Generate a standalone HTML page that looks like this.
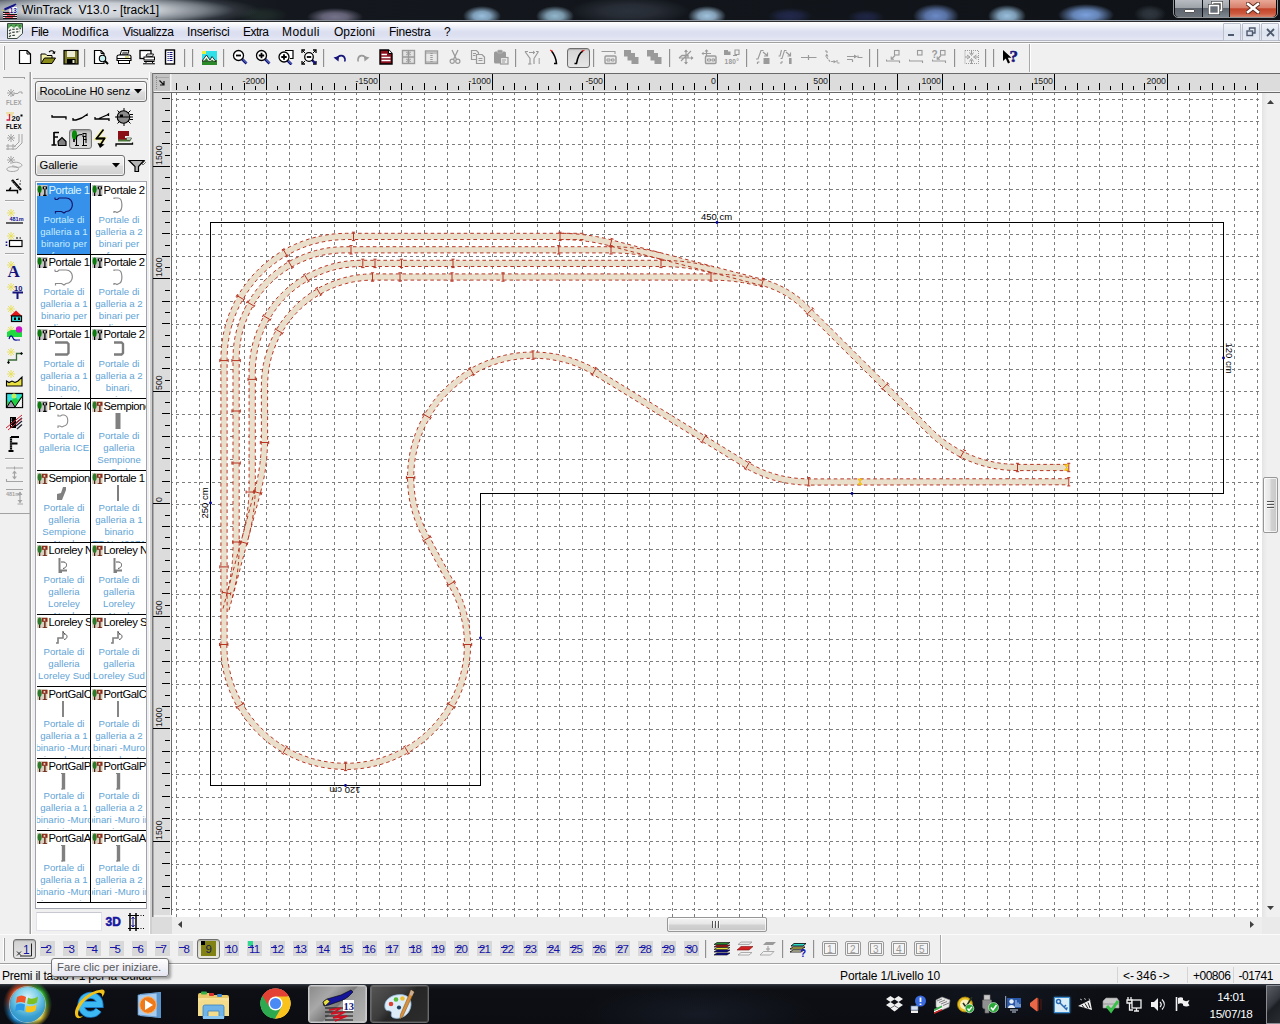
<!DOCTYPE html>
<html><head><meta charset="utf-8"><title>WinTrack</title><style>
*{box-sizing:border-box;margin:0;padding:0}
html,body{width:1280px;height:1024px;overflow:hidden;background:#f0f0f0;font-family:"Liberation Sans",sans-serif;font-size:12px;color:#000}
.abs{position:absolute}
#title{left:0;top:0;width:1280px;height:22px;background:#15181d;overflow:hidden}
#menu{left:0;top:22px;width:1280px;height:22px;background:linear-gradient(#ffffff 0,#f6f7fb 3px,#e4e7f4 7px,#dcdff0 10px,#dde0f1 14px,#e6e8f4 18px,#b4b6c4 18px,#b4b6c4 19px,#f4f4f8 19px,#f4f4f8 20px,#a0a0a0 20px,#a0a0a0 21px,#fdfdfd 21px,#fdfdfd 22px)}
#menu span{position:absolute;top:3px;font-size:12px;color:#000;white-space:nowrap}
#toolbar{left:0;top:44px;width:1280px;height:30px;background:#f0f0f0}
#canvas{left:0;top:0;width:1280px;height:1024px}
</style></head><body>
<svg class="abs" id="canvas" width="1280" height="1024" viewBox="0 0 1280 1024">
<defs><clipPath id="cv"><rect x="172" y="93" width="1090" height="824"/></clipPath></defs>
<rect x="172" y="93" width="1090" height="824" fill="#fff"/>
<g clip-path="url(#cv)">
<path d="M176.5,93V917M199.5,93V917M221.5,93V917M244.5,93V917M266.5,93V917M289.5,93V917M311.5,93V917M334.5,93V917M356.5,93V917M379.5,93V917M401.5,93V917M424.5,93V917M447.5,93V917M469.5,93V917M492.5,93V917M514.5,93V917M537.5,93V917M559.5,93V917M582.5,93V917M604.5,93V917M627.5,93V917M649.5,93V917M672.5,93V917M694.5,93V917M717.5,93V917M739.5,93V917M762.5,93V917M784.5,93V917M807.5,93V917M829.5,93V917M852.5,93V917M874.5,93V917M897.5,93V917M919.5,93V917M942.5,93V917M964.5,93V917M987.5,93V917M1009.5,93V917M1032.5,93V917M1054.5,93V917M1077.5,93V917M1099.5,93V917M1122.5,93V917M1144.5,93V917M1167.5,93V917M1189.5,93V917M1212.5,93V917M1234.5,93V917M1257.5,93V917" stroke="#7d7d7d" stroke-width="1" stroke-dasharray="3 3" stroke-dashoffset="1" fill="none" shape-rendering="crispEdges"/>
<path d="M172,99.5H1262M172,121.5H1262M172,144.5H1262M172,166.5H1262M172,189.5H1262M172,211.5H1262M172,234.5H1262M172,256.5H1262M172,279.5H1262M172,301.5H1262M172,324.5H1262M172,346.5H1262M172,369.5H1262M172,391.5H1262M172,414.5H1262M172,436.5H1262M172,459.5H1262M172,482.5H1262M172,504.5H1262M172,526.5H1262M172,549.5H1262M172,571.5H1262M172,594.5H1262M172,616.5H1262M172,639.5H1262M172,661.5H1262M172,684.5H1262M172,706.5H1262M172,729.5H1262M172,751.5H1262M172,774.5H1262M172,797.5H1262M172,819.5H1262M172,841.5H1262M172,864.5H1262M172,886.5H1262M172,909.5H1262" stroke="#7d7d7d" stroke-width="1" stroke-dasharray="3 3" stroke-dashoffset="2" fill="none" shape-rendering="crispEdges"/>
<path d="M210.5,222.5H1223.5V493.5H480.5V785.5H210.5Z" fill="none" stroke="#000" stroke-width="1" shape-rendering="crispEdges"/>
<path d="M224.0,645.0 L224.0,358.8 L224.1,354.8 L224.3,350.8 L224.6,346.8 L225.0,342.8 L225.6,338.9 L226.4,334.9 L227.2,331.0 L228.2,327.1 L229.3,323.3 L230.5,319.5 L231.8,315.7 L233.3,312.0 L234.9,308.3 L236.6,304.7 L238.5,301.1 L240.4,297.6 L242.5,294.2 L244.6,290.8 L246.9,287.5 L249.3,284.3 L251.8,281.2 L254.4,278.1 L257.1,275.1 L259.9,272.3 L262.7,269.5 L265.7,266.8 L268.8,264.2 L271.9,261.7 L275.1,259.3 L278.4,257.0 L281.8,254.9 L285.2,252.8 L288.7,250.9 L292.3,249.0 L295.9,247.3 L299.6,245.7 L303.3,244.2 L307.1,242.9 L310.9,241.7 L314.7,240.6 L318.6,239.6 L322.5,238.8 L326.5,238.0 L330.4,237.4 L334.4,237.0 L338.4,236.7 L342.4,236.5 L346.4,236.4 L560.0,236.4 L564.0,236.4 L568.1,236.6 L572.1,236.8 L576.1,237.0 L580.1,237.4 L584.1,237.9 L588.1,238.4 L592.1,239.0 L596.1,239.7 L600.0,240.4 L603.9,241.3 L607.9,242.2 L611.8,243.2 L762.5,282.5 L766.5,283.7 L770.5,285.0 L774.4,286.5 L778.2,288.2 L782.0,290.1 L785.7,292.1 L789.2,294.3 L792.7,296.6 L796.1,299.1 L799.4,301.7 L802.5,304.5 L805.5,307.3 L929.6,431.1 L932.5,433.9 L935.5,436.7 L938.6,439.3 L941.8,441.8 L945.1,444.2 L948.4,446.6 L951.9,448.8 L955.4,450.8 L958.9,452.8 L962.5,454.7 L966.2,456.4 L969.9,458.0 L973.7,459.5 L977.5,460.9 L981.4,462.1 L985.3,463.3 L989.3,464.3 L993.3,465.1 L997.3,465.8 L1001.3,466.4 L1005.3,466.9 L1009.4,467.2 L1013.4,467.4 L1017.5,467.5 L1068.8,467.5" fill="none" stroke="#e9dfca" stroke-width="5.8" stroke-linejoin="round"/>
<path d="M560.0,236.4 L584.0,236.4" fill="none" stroke="#e9dfca" stroke-width="5.8" stroke-linejoin="round"/>
<path d="M257.7,491.2 L225.5,611.4" fill="none" stroke="#e9dfca" stroke-width="5.8" stroke-linejoin="round"/>
<path d="M229.3,597.2 L230.3,593.3 L231.2,589.4 L232.1,585.4 L232.8,581.5 L233.5,577.5 L234.1,573.5 L234.6,569.6 L235.1,565.5 L235.5,561.5 L235.7,557.5 L235.9,553.5 L236.1,549.5 L236.1,545.4 L236.1,358.3 L236.2,354.2 L236.4,350.2 L236.8,346.2 L237.3,342.1 L238.0,338.1 L238.8,334.2 L239.8,330.2 L240.9,326.3 L242.2,322.5 L243.6,318.7 L245.2,314.9 L246.8,311.2 L248.7,307.6 L250.6,304.1 L252.7,300.6 L255.0,297.2 L257.3,293.9 L259.8,290.7 L262.4,287.5 L265.1,284.5 L267.9,281.6 L270.8,278.8 L273.8,276.1 L277.0,273.5 L280.2,271.0 L283.5,268.7 L286.9,266.4 L290.3,264.3 L293.9,262.4 L297.5,260.5 L301.2,258.9 L305.0,257.3 L308.8,255.9 L312.6,254.6 L316.5,253.5 L320.5,252.5 L324.4,251.7 L328.4,251.0 L332.5,250.5 L336.5,250.1 L340.5,249.9 L344.6,249.8 L611.0,249.8 L615.0,249.8 L619.1,250.0 L623.1,250.2 L627.1,250.4 L631.1,250.8 L635.1,251.3 L639.1,251.8 L643.1,252.4 L647.1,253.1 L651.0,253.8 L654.9,254.7 L658.9,255.6 L662.8,256.6" fill="none" stroke="#e9dfca" stroke-width="5.8" stroke-linejoin="round"/>
<path d="M245.4,537.1 L246.4,533.2 L247.3,529.3 L248.2,525.4 L248.9,521.4 L249.6,517.4 L250.2,513.5 L250.7,509.5 L251.2,505.5 L251.6,501.5 L251.8,497.4 L252.0,493.4 L252.2,489.4 L252.2,485.4 L252.2,371.9 L252.3,367.8 L252.5,363.8 L252.9,359.8 L253.4,355.7 L254.1,351.7 L254.9,347.8 L255.9,343.8 L257.0,339.9 L258.3,336.1 L259.7,332.3 L261.3,328.5 L262.9,324.8 L264.8,321.2 L266.7,317.6 L268.8,314.2 L271.1,310.8 L273.4,307.5 L275.9,304.3 L278.5,301.1 L281.2,298.1 L284.0,295.2 L286.9,292.4 L289.9,289.7 L293.1,287.1 L296.3,284.6 L299.6,282.3 L303.0,280.0 L306.4,277.9 L310.0,276.0 L313.6,274.1 L317.3,272.5 L321.1,270.9 L324.9,269.5 L328.7,268.2 L332.6,267.1 L336.6,266.1 L340.5,265.3 L344.5,264.6 L348.6,264.1 L352.6,263.7 L356.6,263.5 L360.7,263.4 L661.0,263.4 L665.0,263.4 L669.1,263.6 L673.1,263.8 L677.1,264.0 L681.1,264.4 L685.1,264.9 L689.1,265.4 L693.1,266.0 L697.1,266.7 L701.0,267.4 L704.9,268.3 L708.9,269.2 L712.8,270.2" fill="none" stroke="#e9dfca" stroke-width="5.8" stroke-linejoin="round"/>
<path d="M257.7,491.2 L258.7,487.3 L259.6,483.4 L260.5,479.5 L261.2,475.5 L261.9,471.5 L262.5,467.6 L263.0,463.6 L263.5,459.6 L263.9,455.5 L264.1,451.5 L264.3,447.5 L264.5,443.5 L264.5,439.5 L264.5,385.5 L264.6,381.4 L264.8,377.4 L265.2,373.4 L265.7,369.3 L266.4,365.3 L267.2,361.4 L268.2,357.4 L269.3,353.5 L270.6,349.7 L272.0,345.9 L273.6,342.1 L275.2,338.4 L277.1,334.8 L279.0,331.2 L281.1,327.8 L283.4,324.4 L285.7,321.1 L288.2,317.9 L290.8,314.7 L293.5,311.7 L296.3,308.8 L299.2,306.0 L302.2,303.3 L305.4,300.7 L308.6,298.2 L311.9,295.9 L315.3,293.6 L318.7,291.5 L322.3,289.6 L325.9,287.7 L329.6,286.1 L333.4,284.5 L337.2,283.1 L341.0,281.8 L344.9,280.7 L348.9,279.7 L352.8,278.9 L356.8,278.2 L360.9,277.7 L364.9,277.3 L368.9,277.1 L373.0,277.0 L711.0,277.0 L715.0,277.0 L719.1,277.2 L723.1,277.4 L727.1,277.6 L731.1,278.0 L735.1,278.5 L739.1,279.0 L743.1,279.6 L747.1,280.3 L751.0,281.0 L754.9,281.9 L758.9,282.8 L762.8,283.8" fill="none" stroke="#e9dfca" stroke-width="5.8" stroke-linejoin="round"/>
<path d="M223.7,644.5 L223.8,648.5 L224.0,652.5 L224.3,656.6 L224.8,660.6 L225.4,664.5 L226.1,668.5 L226.9,672.4 L227.9,676.3 L229.0,680.2 L230.3,684.0 L231.7,687.8 L233.1,691.5 L234.8,695.2 L236.5,698.9 L238.3,702.4 L240.3,705.9 L242.4,709.4 L244.6,712.8 L246.9,716.1 L249.3,719.3 L251.9,722.4 L254.5,725.5 L257.2,728.4 L260.0,731.3 L262.9,734.1 L265.9,736.8 L269.0,739.3 L272.2,741.8 L275.4,744.2 L278.8,746.5 L282.2,748.6 L285.6,750.6 L289.2,752.6 L292.8,754.4 L296.4,756.0 L300.1,757.6 L303.9,759.0 L307.7,760.4 L311.6,761.6 L315.4,762.6 L319.4,763.5 L323.3,764.3 L327.3,765.0 L331.3,765.6 L335.3,766.0 L339.3,766.2 L343.3,766.4 L347.3,766.4 L351.3,766.3 L355.4,766.0 L359.4,765.6 L363.4,765.1 L367.3,764.4 L371.3,763.7 L375.2,762.8 L379.1,761.7 L382.9,760.5 L386.8,759.2 L390.5,757.8 L394.2,756.3 L397.9,754.6 L401.5,752.8 L405.1,750.9 L408.5,748.9 L411.9,746.8 L415.3,744.5 L418.5,742.2 L421.7,739.7 L424.8,737.1 L427.8,734.5 L430.8,731.7 L433.6,728.8 L436.3,725.9 L439.0,722.9 L441.5,719.7 L443.9,716.5 L446.3,713.2 L448.5,709.9 L450.6,706.4 L452.6,702.9 L454.4,699.4 L456.2,695.8 L457.8,692.1 L459.3,688.3 L460.7,684.6 L462.0,680.7 L463.1,676.9 L464.1,673.0 L465.0,669.1 L465.7,665.1 L466.4,661.1 L466.8,657.1 L467.2,653.1 L467.4,649.1 L467.5,645.1 L467.5,641.1 L467.3,637.0 L467.0,633.0 L466.5,629.0 L465.9,625.0 L465.2,621.1 L464.4,617.1 L463.4,613.2 L462.3,609.4 L461.1,605.5 L459.8,601.7 L458.3,598.0 L456.7,594.3 L455.0,590.6 L453.1,587.1 L451.2,583.5 L427.0,538.7 L425.1,535.2 L423.2,531.6 L421.5,528.0 L419.9,524.3 L418.4,520.6 L417.1,516.8 L415.9,513.0 L414.8,509.2 L413.8,505.3 L413.0,501.4 L412.2,497.4 L411.6,493.5 L411.2,489.5 L410.9,485.5 L410.7,481.5 L410.6,477.5 L410.7,473.5 L410.9,469.5 L411.2,465.5 L411.6,461.5 L412.2,457.6 L413.0,453.6 L413.8,449.7 L414.8,445.8 L415.9,442.0 L417.1,438.2 L418.4,434.4 L419.9,430.7 L421.5,427.0 L423.2,423.4 L425.1,419.8 L427.0,416.3 L429.1,412.9 L431.2,409.5 L433.5,406.2 L435.9,403.0 L438.4,399.9 L441.0,396.8 L443.7,393.8 L446.5,391.0 L449.3,388.2 L452.3,385.5 L455.4,382.9 L458.5,380.4 L461.7,378.0 L465.0,375.7 L468.4,373.6 L471.8,371.5 L475.3,369.6 L478.9,367.7 L482.5,366.0 L486.2,364.4 L489.9,362.9 L493.7,361.6 L497.5,360.4 L501.3,359.3 L505.2,358.3 L509.1,357.5 L513.1,356.7 L517.0,356.1 L521.0,355.7 L525.0,355.4 L529.0,355.2 L533.0,355.1 L537.0,355.2 L541.0,355.4 L545.0,355.7 L549.0,356.1 L552.9,356.7 L556.9,357.5 L560.8,358.3 L564.7,359.3 L568.5,360.4 L572.3,361.6 L576.1,362.9 L579.8,364.4 L583.5,366.0 L587.1,367.7 L590.7,369.6 L594.2,371.5 L747.5,465.6 L751.0,467.5 L754.6,469.4 L758.2,471.1 L761.9,472.7 L765.6,474.2 L769.4,475.5 L773.2,476.7 L777.0,477.8 L780.9,478.8 L784.8,479.6 L788.8,480.4 L792.7,481.0 L796.7,481.4 L800.7,481.7 L804.7,481.9 L808.7,482.0 L1068.8,481.8" fill="none" stroke="#e9dfca" stroke-width="5.8" stroke-linejoin="round"/>
<path d="M227.1,645.0 L227.1,358.8 L227.2,354.9 L227.4,351.0 L227.7,347.1 L228.1,343.2 L228.7,339.4 L229.4,335.5 L230.2,331.7 L231.2,327.9 L232.2,324.2 L233.4,320.5 L234.7,316.8 L236.2,313.1 L237.7,309.6 L239.4,306.0 L241.2,302.6 L243.1,299.2 L245.1,295.8 L247.2,292.5 L249.4,289.3 L251.8,286.2 L254.2,283.1 L256.7,280.1 L259.3,277.2 L262.0,274.4 L264.8,271.7 L267.7,269.1 L270.7,266.6 L273.8,264.2 L276.9,261.8 L280.1,259.6 L283.4,257.5 L286.7,255.5 L290.2,253.6 L293.6,251.8 L297.2,250.1 L300.7,248.6 L304.4,247.1 L308.1,245.8 L311.8,244.6 L315.5,243.6 L319.3,242.6 L323.1,241.8 L327.0,241.1 L330.8,240.5 L334.7,240.1 L338.6,239.8 L342.5,239.6 L346.4,239.5 L560.0,239.5 L564.0,239.5 L567.9,239.7 L571.9,239.9 L575.8,240.1 L579.8,240.5 L583.7,240.9 L587.7,241.5 L591.6,242.0 L595.5,242.7 L599.4,243.5 L603.3,244.3 L607.1,245.2 L611.0,246.2 L761.7,285.5 L765.6,286.6 L769.4,287.9 L773.2,289.4 L776.9,291.0 L780.5,292.8 L784.1,294.8 L787.6,296.9 L790.9,299.1 L794.2,301.5 L797.4,304.1 L800.4,306.7 L803.3,309.5 L927.4,433.3 L930.4,436.2 L933.5,439.0 L936.7,441.7 L939.9,444.3 L943.3,446.8 L946.7,449.1 L950.2,451.4 L953.8,453.5 L957.4,455.6 L961.2,457.5 L964.9,459.2 L968.7,460.9 L972.6,462.4 L976.5,463.8 L980.5,465.1 L984.5,466.3 L988.6,467.3 L992.6,468.2 L996.7,468.9 L1000.9,469.5 L1005.0,470.0 L1009.2,470.3 L1013.3,470.5 L1017.5,470.6 L1068.8,470.6" fill="none" stroke="#b63523" stroke-width="1" stroke-dasharray="3.6 3"/>
<path d="M220.9,645.0 L220.9,358.8 L221.0,354.7 L221.2,350.6 L221.5,346.5 L222.0,342.4 L222.6,338.4 L223.3,334.3 L224.2,330.3 L225.2,326.3 L226.3,322.4 L227.6,318.5 L228.9,314.6 L230.5,310.8 L232.1,307.0 L233.8,303.3 L235.7,299.6 L237.7,296.1 L239.8,292.5 L242.1,289.1 L244.4,285.7 L246.8,282.4 L249.4,279.2 L252.0,276.1 L254.8,273.0 L257.7,270.1 L260.6,267.2 L263.7,264.4 L266.8,261.8 L270.0,259.2 L273.3,256.8 L276.7,254.5 L280.1,252.2 L283.6,250.1 L287.2,248.1 L290.9,246.2 L294.6,244.5 L298.4,242.9 L302.2,241.3 L306.1,240.0 L310.0,238.7 L313.9,237.6 L317.9,236.6 L321.9,235.7 L326.0,235.0 L330.0,234.4 L334.1,233.9 L338.2,233.6 L342.3,233.4 L346.4,233.3 L560.0,233.3 L564.1,233.3 L568.2,233.5 L572.3,233.7 L576.3,234.0 L580.4,234.3 L584.5,234.8 L588.5,235.3 L592.6,235.9 L596.6,236.6 L600.6,237.4 L604.6,238.3 L608.6,239.2 L612.5,240.2 L763.3,279.5 L767.5,280.7 L771.5,282.1 L775.6,283.7 L779.5,285.4 L783.4,287.3 L787.2,289.4 L790.9,291.6 L794.5,294.1 L798.0,296.6 L801.4,299.3 L804.6,302.2 L807.7,305.2 L931.8,428.9 L934.6,431.7 L937.6,434.3 L940.6,436.9 L943.7,439.4 L946.9,441.7 L950.2,444.0 L953.5,446.1 L956.9,448.2 L960.4,450.1 L963.9,451.9 L967.5,453.6 L971.1,455.2 L974.8,456.6 L978.5,458.0 L982.3,459.2 L986.1,460.3 L990.0,461.2 L993.9,462.1 L997.8,462.8 L1001.7,463.4 L1005.6,463.8 L1009.6,464.1 L1013.5,464.3 L1017.5,464.4 L1068.8,464.4" fill="none" stroke="#b63523" stroke-width="1" stroke-dasharray="3.6 3"/>
<path d="M560.0,239.5 L584.0,239.5" fill="none" stroke="#b63523" stroke-width="1" stroke-dasharray="3.6 3"/>
<path d="M560.0,233.3 L584.0,233.3" fill="none" stroke="#b63523" stroke-width="1" stroke-dasharray="3.6 3"/>
<path d="M254.7,490.4 L222.5,610.6" fill="none" stroke="#b63523" stroke-width="1" stroke-dasharray="3.6 3"/>
<path d="M260.7,492.0 L228.5,612.2" fill="none" stroke="#b63523" stroke-width="1" stroke-dasharray="3.6 3"/>
<path d="M232.3,598.0 L233.3,594.0 L234.2,590.1 L235.1,586.1 L235.9,582.1 L236.6,578.0 L237.2,574.0 L237.7,569.9 L238.2,565.9 L238.5,561.8 L238.8,557.7 L239.0,553.6 L239.2,549.5 L239.2,545.4 L239.2,358.3 L239.3,354.4 L239.5,350.4 L239.9,346.5 L240.4,342.6 L241.0,338.7 L241.8,334.8 L242.8,331.0 L243.9,327.2 L245.1,323.5 L246.5,319.8 L248.0,316.2 L249.6,312.6 L251.4,309.0 L253.3,305.6 L255.4,302.2 L257.5,298.9 L259.8,295.7 L262.2,292.6 L264.7,289.5 L267.3,286.6 L270.1,283.8 L272.9,281.0 L275.8,278.4 L278.9,275.9 L282.0,273.5 L285.2,271.2 L288.5,269.1 L291.9,267.0 L295.3,265.1 L298.9,263.3 L302.5,261.7 L306.1,260.2 L309.8,258.8 L313.5,257.6 L317.3,256.5 L321.1,255.5 L325.0,254.7 L328.9,254.1 L332.8,253.6 L336.7,253.2 L340.7,253.0 L344.6,252.9 L611.0,252.9 L615.0,252.9 L618.9,253.1 L622.9,253.3 L626.8,253.5 L630.8,253.9 L634.7,254.3 L638.7,254.9 L642.6,255.4 L646.5,256.1 L650.4,256.9 L654.3,257.7 L658.1,258.6 L662.0,259.6" fill="none" stroke="#b63523" stroke-width="1" stroke-dasharray="3.6 3"/>
<path d="M226.3,596.4 L227.3,592.6 L228.2,588.7 L229.0,584.8 L229.8,580.9 L230.5,577.0 L231.0,573.1 L231.6,569.2 L232.0,565.2 L232.4,561.3 L232.6,557.3 L232.8,553.4 L233.0,549.4 L233.0,545.4 L233.0,358.3 L233.1,354.1 L233.3,350.0 L233.7,345.8 L234.2,341.7 L234.9,337.6 L235.8,333.5 L236.8,329.4 L238.0,325.4 L239.3,321.4 L240.7,317.5 L242.3,313.7 L244.1,309.9 L245.9,306.2 L248.0,302.5 L250.1,298.9 L252.4,295.4 L254.8,292.0 L257.3,288.7 L260.0,285.5 L262.8,282.4 L265.7,279.4 L268.7,276.5 L271.8,273.7 L275.0,271.0 L278.3,268.5 L281.7,266.1 L285.2,263.8 L288.8,261.7 L292.5,259.6 L296.2,257.8 L300.0,256.0 L303.8,254.4 L307.7,253.0 L311.7,251.7 L315.7,250.5 L319.8,249.5 L323.9,248.6 L328.0,247.9 L332.1,247.4 L336.3,247.0 L340.4,246.8 L344.6,246.7 L611.0,246.7 L615.1,246.7 L619.2,246.9 L623.3,247.1 L627.3,247.4 L631.4,247.7 L635.5,248.2 L639.5,248.7 L643.6,249.3 L647.6,250.0 L651.6,250.8 L655.6,251.7 L659.6,252.6 L663.5,253.6" fill="none" stroke="#b63523" stroke-width="1" stroke-dasharray="3.6 3"/>
<path d="M248.4,537.9 L249.4,534.0 L250.3,530.0 L251.2,526.0 L252.0,522.0 L252.7,517.9 L253.3,513.9 L253.8,509.8 L254.3,505.8 L254.6,501.7 L254.9,497.6 L255.1,493.5 L255.3,489.4 L255.3,485.4 L255.3,371.9 L255.4,368.0 L255.6,364.0 L256.0,360.1 L256.5,356.2 L257.1,352.3 L257.9,348.4 L258.9,344.6 L260.0,340.8 L261.2,337.1 L262.6,333.4 L264.1,329.8 L265.7,326.2 L267.5,322.6 L269.4,319.2 L271.5,315.8 L273.6,312.5 L275.9,309.3 L278.3,306.2 L280.8,303.1 L283.4,300.2 L286.2,297.4 L289.0,294.6 L291.9,292.0 L295.0,289.5 L298.1,287.1 L301.3,284.8 L304.6,282.7 L308.0,280.6 L311.4,278.7 L315.0,276.9 L318.6,275.3 L322.2,273.8 L325.9,272.4 L329.6,271.2 L333.4,270.1 L337.2,269.1 L341.1,268.3 L345.0,267.7 L348.9,267.2 L352.8,266.8 L356.8,266.6 L360.7,266.5 L661.0,266.5 L665.0,266.5 L668.9,266.7 L672.9,266.9 L676.8,267.1 L680.8,267.5 L684.7,267.9 L688.7,268.5 L692.6,269.0 L696.5,269.7 L700.4,270.5 L704.3,271.3 L708.1,272.2 L712.0,273.2" fill="none" stroke="#b63523" stroke-width="1" stroke-dasharray="3.6 3"/>
<path d="M242.4,536.3 L243.4,532.5 L244.3,528.6 L245.1,524.7 L245.9,520.9 L246.6,516.9 L247.1,513.0 L247.7,509.1 L248.1,505.2 L248.5,501.2 L248.7,497.2 L248.9,493.3 L249.1,489.3 L249.1,485.4 L249.1,371.9 L249.2,367.7 L249.4,363.6 L249.8,359.4 L250.3,355.3 L251.0,351.2 L251.9,347.1 L252.9,343.0 L254.1,339.0 L255.4,335.0 L256.8,331.1 L258.4,327.3 L260.2,323.5 L262.0,319.8 L264.1,316.1 L266.2,312.5 L268.5,309.0 L270.9,305.6 L273.4,302.3 L276.1,299.1 L278.9,296.0 L281.8,293.0 L284.8,290.1 L287.9,287.3 L291.1,284.6 L294.4,282.1 L297.8,279.7 L301.3,277.4 L304.9,275.3 L308.6,273.2 L312.3,271.4 L316.1,269.6 L319.9,268.0 L323.8,266.6 L327.8,265.3 L331.8,264.1 L335.9,263.1 L340.0,262.2 L344.1,261.5 L348.2,261.0 L352.4,260.6 L356.5,260.4 L360.7,260.3 L661.0,260.3 L665.1,260.3 L669.2,260.5 L673.3,260.7 L677.3,261.0 L681.4,261.3 L685.5,261.8 L689.5,262.3 L693.6,262.9 L697.6,263.6 L701.6,264.4 L705.6,265.3 L709.6,266.2 L713.5,267.2" fill="none" stroke="#b63523" stroke-width="1" stroke-dasharray="3.6 3"/>
<path d="M260.7,492.0 L261.7,488.1 L262.6,484.1 L263.5,480.1 L264.3,476.1 L265.0,472.0 L265.6,468.0 L266.1,463.9 L266.6,459.9 L266.9,455.8 L267.2,451.7 L267.4,447.6 L267.6,443.5 L267.6,439.5 L267.6,385.5 L267.7,381.6 L267.9,377.6 L268.3,373.7 L268.8,369.8 L269.4,365.9 L270.2,362.0 L271.2,358.2 L272.3,354.4 L273.5,350.7 L274.9,347.0 L276.4,343.4 L278.0,339.8 L279.8,336.2 L281.7,332.8 L283.8,329.4 L285.9,326.1 L288.2,322.9 L290.6,319.8 L293.1,316.7 L295.7,313.8 L298.5,311.0 L301.3,308.2 L304.2,305.6 L307.3,303.1 L310.4,300.7 L313.6,298.4 L316.9,296.3 L320.3,294.2 L323.7,292.3 L327.3,290.5 L330.9,288.9 L334.5,287.4 L338.2,286.0 L341.9,284.8 L345.7,283.7 L349.5,282.7 L353.4,281.9 L357.3,281.3 L361.2,280.8 L365.1,280.4 L369.1,280.2 L373.0,280.1 L711.0,280.1 L715.0,280.1 L718.9,280.3 L722.9,280.5 L726.8,280.7 L730.8,281.1 L734.7,281.5 L738.7,282.1 L742.6,282.6 L746.5,283.3 L750.4,284.1 L754.3,284.9 L758.1,285.8 L762.0,286.8" fill="none" stroke="#b63523" stroke-width="1" stroke-dasharray="3.6 3"/>
<path d="M254.7,490.4 L255.7,486.6 L256.6,482.7 L257.4,478.8 L258.2,474.9 L258.9,471.0 L259.4,467.1 L260.0,463.2 L260.4,459.2 L260.8,455.3 L261.0,451.3 L261.2,447.4 L261.4,443.4 L261.4,439.5 L261.4,385.5 L261.5,381.3 L261.7,377.2 L262.1,373.0 L262.6,368.9 L263.3,364.8 L264.2,360.7 L265.2,356.6 L266.4,352.6 L267.7,348.6 L269.1,344.7 L270.7,340.9 L272.5,337.1 L274.3,333.4 L276.4,329.7 L278.5,326.1 L280.8,322.6 L283.2,319.2 L285.7,315.9 L288.4,312.7 L291.2,309.6 L294.1,306.6 L297.1,303.7 L300.2,300.9 L303.4,298.2 L306.7,295.7 L310.1,293.3 L313.6,291.0 L317.2,288.9 L320.9,286.8 L324.6,285.0 L328.4,283.2 L332.2,281.6 L336.1,280.2 L340.1,278.9 L344.1,277.7 L348.2,276.7 L352.3,275.8 L356.4,275.1 L360.5,274.6 L364.7,274.2 L368.8,274.0 L373.0,273.9 L711.0,273.9 L715.1,273.9 L719.2,274.1 L723.3,274.3 L727.3,274.6 L731.4,274.9 L735.5,275.4 L739.5,275.9 L743.6,276.5 L747.6,277.2 L751.6,278.0 L755.6,278.9 L759.6,279.8 L763.5,280.8" fill="none" stroke="#b63523" stroke-width="1" stroke-dasharray="3.6 3"/>
<path d="M220.6,644.6 L220.7,648.6 L220.9,652.7 L221.2,656.9 L221.7,661.0 L222.3,665.0 L223.0,669.1 L223.9,673.1 L224.9,677.1 L226.1,681.1 L227.4,685.0 L228.8,688.9 L230.3,692.7 L231.9,696.5 L233.7,700.2 L235.6,703.9 L237.6,707.5 L239.8,711.0 L242.0,714.5 L244.4,717.9 L246.9,721.2 L249.5,724.4 L252.2,727.5 L254.9,730.6 L257.8,733.5 L260.8,736.4 L263.9,739.1 L267.1,741.8 L270.3,744.3 L273.7,746.7 L277.1,749.0 L280.6,751.2 L284.1,753.3 L287.8,755.3 L291.4,757.2 L295.2,758.9 L299.0,760.5 L302.8,762.0 L306.7,763.3 L310.7,764.5 L314.7,765.6 L318.7,766.6 L322.7,767.4 L326.8,768.1 L330.9,768.6 L335.0,769.0 L339.1,769.3 L343.2,769.5 L347.4,769.5 L351.5,769.4 L355.6,769.1 L359.7,768.7 L363.8,768.2 L367.9,767.5 L371.9,766.7 L376.0,765.8 L379.9,764.7 L383.9,763.5 L387.8,762.2 L391.7,760.7 L395.5,759.1 L399.2,757.4 L402.9,755.6 L406.6,753.6 L410.1,751.6 L413.6,749.4 L417.1,747.1 L420.4,744.6 L423.7,742.1 L426.8,739.5 L429.9,736.8 L432.9,733.9 L435.8,731.0 L438.7,728.0 L441.4,724.8 L444.0,721.6 L446.4,718.4 L448.8,715.0 L451.1,711.5 L453.3,708.0 L455.3,704.4 L457.2,700.8 L459.0,697.1 L460.7,693.3 L462.2,689.5 L463.7,685.6 L464.9,681.7 L466.1,677.7 L467.1,673.7 L468.0,669.7 L468.8,665.6 L469.4,661.5 L469.9,657.4 L470.3,653.3 L470.5,649.2 L470.6,645.1 L470.5,641.0 L470.4,636.8 L470.0,632.7 L469.6,628.6 L469.0,624.5 L468.3,620.5 L467.4,616.4 L466.4,612.4 L465.3,608.5 L464.0,604.5 L462.7,600.6 L461.1,596.8 L459.5,593.0 L457.7,589.3 L455.9,585.6 L453.9,582.1 L429.7,537.2 L427.8,533.7 L426.0,530.3 L424.3,526.7 L422.8,523.2 L421.3,519.5 L420.0,515.8 L418.8,512.1 L417.8,508.4 L416.8,504.6 L416.0,500.8 L415.3,496.9 L414.7,493.1 L414.3,489.2 L414.0,485.3 L413.8,481.4 L413.7,477.5 L413.8,473.6 L414.0,469.7 L414.3,465.8 L414.7,461.9 L415.3,458.1 L416.0,454.2 L416.8,450.4 L417.8,446.6 L418.8,442.9 L420.0,439.2 L421.3,435.5 L422.8,431.8 L424.3,428.3 L426.0,424.7 L427.8,421.3 L429.7,417.8 L431.7,414.5 L433.8,411.2 L436.0,408.0 L438.4,404.9 L440.8,401.8 L443.3,398.8 L445.9,395.9 L448.6,393.1 L451.4,390.4 L454.3,387.8 L457.3,385.3 L460.4,382.9 L463.5,380.5 L466.7,378.3 L470.0,376.2 L473.3,374.2 L476.8,372.3 L480.2,370.5 L483.8,368.8 L487.3,367.3 L491.0,365.8 L494.7,364.5 L498.4,363.3 L502.1,362.3 L505.9,361.3 L509.7,360.5 L513.6,359.8 L517.4,359.2 L521.3,358.8 L525.2,358.5 L529.1,358.3 L533.0,358.2 L536.9,358.3 L540.8,358.5 L544.7,358.8 L548.6,359.2 L552.4,359.8 L556.3,360.5 L560.1,361.3 L563.9,362.3 L567.6,363.3 L571.3,364.5 L575.0,365.8 L578.7,367.3 L582.2,368.8 L585.8,370.5 L589.2,372.3 L592.6,374.1 L745.9,468.2 L749.5,470.3 L753.2,472.2 L756.9,473.9 L760.7,475.5 L764.5,477.1 L768.4,478.4 L772.3,479.7 L776.2,480.8 L780.2,481.8 L784.2,482.7 L788.3,483.4 L792.3,484.0 L796.4,484.5 L800.5,484.8 L804.6,485.0 L808.7,485.1 L1068.8,484.8" fill="none" stroke="#b63523" stroke-width="1" stroke-dasharray="3.6 3"/>
<path d="M226.8,644.4 L226.9,648.4 L227.1,652.3 L227.4,656.2 L227.8,660.1 L228.4,664.0 L229.1,667.9 L230.0,671.7 L230.9,675.5 L232.0,679.3 L233.2,683.0 L234.6,686.7 L236.0,690.4 L237.6,693.9 L239.3,697.5 L241.1,701.0 L243.0,704.4 L245.0,707.7 L247.2,711.0 L249.4,714.2 L251.8,717.4 L254.2,720.4 L256.8,723.4 L259.4,726.3 L262.2,729.1 L265.0,731.8 L268.0,734.4 L271.0,736.9 L274.1,739.3 L277.2,741.7 L280.5,743.9 L283.8,746.0 L287.2,747.9 L290.6,749.8 L294.1,751.6 L297.7,753.2 L301.3,754.7 L305.0,756.1 L308.7,757.4 L312.4,758.6 L316.2,759.6 L320.0,760.5 L323.9,761.3 L327.7,761.9 L331.6,762.5 L335.5,762.9 L339.4,763.1 L343.4,763.3 L347.3,763.3 L351.2,763.2 L355.1,762.9 L359.0,762.5 L362.9,762.0 L366.8,761.4 L370.6,760.6 L374.4,759.7 L378.2,758.7 L382.0,757.6 L385.7,756.3 L389.4,754.9 L393.0,753.4 L396.6,751.8 L400.1,750.1 L403.5,748.2 L406.9,746.2 L410.3,744.2 L413.5,742.0 L416.7,739.7 L419.8,737.3 L422.8,734.8 L425.8,732.2 L428.6,729.5 L431.4,726.7 L434.0,723.8 L436.6,720.9 L439.1,717.8 L441.4,714.7 L443.7,711.5 L445.9,708.2 L447.9,704.9 L449.9,701.5 L451.7,698.0 L453.4,694.5 L455.0,690.9 L456.4,687.2 L457.8,683.5 L459.0,679.8 L460.1,676.1 L461.1,672.3 L462.0,668.4 L462.7,664.6 L463.3,660.7 L463.8,656.8 L464.1,652.9 L464.3,649.0 L464.4,645.1 L464.4,641.1 L464.2,637.2 L463.9,633.3 L463.4,629.4 L462.9,625.5 L462.2,621.7 L461.4,617.8 L460.4,614.0 L459.4,610.2 L458.2,606.5 L456.8,602.8 L455.4,599.2 L453.9,595.6 L452.2,592.0 L450.4,588.5 L448.4,585.0 L424.3,540.2 L422.3,536.7 L420.4,533.0 L418.7,529.3 L417.1,525.5 L415.5,521.7 L414.2,517.8 L412.9,513.9 L411.8,510.0 L410.8,506.0 L409.9,502.0 L409.2,497.9 L408.6,493.9 L408.1,489.8 L407.8,485.7 L407.6,481.6 L407.5,477.5 L407.6,473.4 L407.8,469.3 L408.1,465.2 L408.6,461.1 L409.2,457.1 L409.9,453.0 L410.8,449.0 L411.8,445.0 L412.9,441.1 L414.2,437.2 L415.5,433.3 L417.1,429.5 L418.7,425.7 L420.4,422.0 L422.3,418.3 L424.3,414.7 L426.4,411.2 L428.7,407.8 L431.0,404.4 L433.4,401.1 L436.0,397.9 L438.6,394.8 L441.4,391.7 L444.3,388.8 L447.2,385.9 L450.3,383.1 L453.4,380.5 L456.6,377.9 L459.9,375.5 L463.3,373.2 L466.7,370.9 L470.2,368.8 L473.8,366.8 L477.5,364.9 L481.2,363.2 L485.0,361.6 L488.8,360.0 L492.7,358.7 L496.6,357.4 L500.5,356.3 L504.5,355.3 L508.5,354.4 L512.6,353.7 L516.6,353.1 L520.7,352.6 L524.8,352.3 L528.9,352.1 L533.0,352.0 L537.1,352.1 L541.2,352.3 L545.3,352.6 L549.4,353.1 L553.4,353.7 L557.5,354.4 L561.5,355.3 L565.5,356.3 L569.4,357.4 L573.3,358.7 L577.2,360.0 L581.0,361.6 L584.8,363.2 L588.5,364.9 L592.2,366.8 L595.8,368.9 L749.1,463.0 L752.5,464.8 L755.9,466.6 L759.5,468.3 L763.0,469.8 L766.7,471.3 L770.4,472.6 L774.1,473.8 L777.8,474.8 L781.6,475.8 L785.4,476.6 L789.3,477.3 L793.1,477.9 L797.0,478.3 L800.9,478.6 L804.8,478.8 L808.7,478.9 L1068.7,478.7" fill="none" stroke="#b63523" stroke-width="1" stroke-dasharray="3.6 3"/>
<path d="M227.9,644.5 L219.5,644.5 M227.9,646.1 L227.9,642.9 M219.5,646.1 L219.5,642.9 M243.7,703.4 L236.4,707.6 M244.5,704.7 L242.9,702.0 M237.2,708.9 L235.6,706.2 M286.8,746.4 L282.6,753.7 M288.1,747.2 L285.4,745.6 M283.9,754.5 L281.2,752.9 M345.6,762.2 L345.6,770.6 M347.2,762.2 L344.0,762.2 M347.2,770.6 L344.0,770.6 M404.5,746.4 L408.7,753.7 M405.8,745.6 L403.1,747.2 M410.0,752.9 L407.3,754.5 M447.5,703.4 L454.8,707.6 M448.3,702.0 L446.7,704.7 M455.6,706.2 L454.0,708.9 M463.3,644.5 L471.7,644.5 M463.3,642.9 L463.3,646.1 M471.7,642.9 L471.7,646.1 M447.5,585.6 L454.8,581.4 M446.7,584.3 L448.3,587.0 M454.0,580.1 L455.6,582.8 M414.8,477.5 L406.4,477.5 M414.8,479.1 L414.8,475.9 M406.4,479.1 L406.4,475.9 M430.6,418.4 L423.4,414.2 M429.8,419.8 L431.4,417.0 M422.6,415.6 L424.2,412.8 M473.9,375.1 L469.7,367.9 M472.5,375.9 L475.3,374.3 M468.3,368.7 L471.1,367.1 M533.0,359.3 L533.0,350.9 M531.4,359.3 L534.6,359.3 M531.4,350.9 L534.6,350.9 M592.1,375.1 L596.3,367.9 M590.7,374.3 L593.5,375.9 M594.9,367.1 L597.7,368.7 M430.6,536.6 L423.4,540.8 M431.4,538.0 L429.8,535.2 M424.2,542.2 L422.6,539.4 M701.6,442.4 L705.9,435.1 M700.2,441.5 L703.0,443.2 M704.5,434.3 L707.3,436.0 M745.4,469.2 L749.6,462.0 M744.0,468.4 L746.8,470.0 M748.2,461.2 L751.0,462.8 M808.7,485.9 L808.7,477.6 M807.1,485.9 L810.3,485.9 M807.1,477.6 L810.3,477.6 M1068.8,485.9 L1068.8,477.6 M1067.2,485.9 L1070.3,485.9 M1067.2,477.6 L1070.3,477.6 M1068.8,471.7 L1068.8,463.3 M1067.2,471.7 L1070.3,471.7 M1067.2,463.3 L1070.3,463.3 M1017.5,471.7 L1017.5,463.3 M1015.9,471.7 L1019.1,471.7 M1015.9,463.3 L1019.1,463.3 M244.0,299.7 L236.8,295.5 M243.2,301.1 L244.8,298.3 M236.0,296.9 L237.6,294.1 M287.3,256.4 L283.1,249.2 M285.9,257.2 L288.7,255.6 M281.7,250.0 L284.5,248.4 M353.5,240.6 L353.5,232.2 M351.9,240.6 L355.1,240.6 M351.9,232.2 L355.1,232.2 M560.0,240.6 L560.0,232.2 M558.4,240.6 L561.6,240.6 M558.4,232.2 L561.6,232.2 M254.3,306.2 L247.0,301.9 M253.5,307.5 L255.1,304.8 M246.2,303.3 L247.8,300.6 M292.4,268.0 L288.2,260.7 M291.1,268.8 L293.8,267.2 M286.9,261.5 L289.6,259.9 M351.0,254.0 L351.0,245.6 M349.4,254.0 L352.6,254.0 M349.4,245.6 L352.6,245.6 M558.8,254.0 L558.8,245.6 M557.1,254.0 L560.4,254.0 M557.1,245.6 L560.4,245.6 M611.0,254.0 L611.0,245.6 M609.4,254.0 L612.6,254.0 M609.4,245.6 L612.6,245.6 M609.9,246.9 L612.1,238.7 M608.4,246.4 L611.5,247.3 M610.5,238.3 L613.6,239.2 M270.4,319.8 L263.1,315.5 M269.6,321.1 L271.2,318.4 M262.3,316.9 L263.9,314.2 M308.5,281.6 L304.3,274.3 M307.2,282.4 L309.9,280.8 M303.0,275.1 L305.7,273.5 M362.8,267.6 L362.8,259.2 M361.2,267.6 L364.4,267.6 M361.2,259.2 L364.4,259.2 M375.0,267.6 L375.0,259.2 M373.4,267.6 L376.6,267.6 M373.4,259.2 L376.6,259.2 M661.0,267.6 L661.0,259.2 M659.4,267.6 L662.6,267.6 M659.4,259.2 L662.6,259.2 M401.5,267.6 L401.5,259.2 M399.9,267.6 L403.1,267.6 M399.9,259.2 L403.1,259.2 M453.0,267.6 L453.0,259.2 M451.4,267.6 L454.6,267.6 M451.4,259.2 L454.6,259.2 M282.7,333.4 L275.4,329.1 M281.9,334.7 L283.5,332.0 M274.6,330.5 L276.2,327.8 M320.8,295.2 L316.6,287.9 M319.5,296.0 L322.2,294.4 M315.3,288.7 L318.0,287.1 M372.5,281.2 L372.5,272.8 M370.9,281.2 L374.1,281.2 M370.9,272.8 L374.1,272.8 M400.0,281.2 L400.0,272.8 M398.4,281.2 L401.6,281.2 M398.4,272.8 L401.6,272.8 M452.0,281.2 L452.0,272.8 M450.4,281.2 L453.6,281.2 M450.4,272.8 L453.6,272.8 M503.0,281.2 L503.0,272.8 M501.4,281.2 L504.6,281.2 M501.4,272.8 L504.6,272.8 M711.0,281.2 L711.0,272.8 M709.4,281.2 L712.6,281.2 M709.4,272.8 L712.6,272.8 M761.4,286.6 L763.6,278.4 M759.9,286.1 L763.0,287.0 M762.0,278.0 L765.1,278.9 M807.0,314.2 L813.0,308.3 M805.9,313.1 L808.2,315.4 M811.8,307.1 L814.1,309.4 M882.0,389.2 L888.0,383.3 M880.9,388.1 L883.2,390.4 M886.8,382.1 L889.1,384.4 M960.4,457.4 L964.6,450.1 M959.0,456.6 L961.8,458.2 M963.2,449.3 L966.0,450.9 M219.8,360.6 L228.2,360.6 M219.8,359.0 L219.8,362.2 M228.2,359.0 L228.2,362.2 M219.8,566.9 L228.2,566.9 M219.8,565.3 L219.8,568.5 M228.2,565.3 L228.2,568.5 M231.9,360.6 L240.3,360.6 M231.9,359.0 L231.9,362.2 M240.3,359.0 L240.3,362.2 M231.9,411.0 L240.3,411.0 M231.9,409.4 L231.9,412.6 M240.3,409.4 L240.3,412.6 M231.9,463.0 L240.3,463.0 M231.9,461.4 L231.9,464.6 M240.3,461.4 L240.3,464.6 M248.0,379.4 L256.4,379.4 M248.0,377.8 L248.0,381.0 M256.4,377.8 L256.4,381.0 M260.3,442.5 L268.7,442.5 M260.3,440.9 L260.3,444.1 M268.7,440.9 L268.7,444.1 M246.1,492.0 L254.5,492.0 M246.1,490.4 L246.1,493.6 M254.5,490.4 L254.5,493.6 M253.4,491.4 L261.6,493.6 M253.9,489.9 L253.0,493.0 M262.0,492.0 L261.1,495.1 M232.7,542.0 L241.1,542.0 M232.7,540.4 L232.7,543.6 M241.1,540.4 L241.1,543.6 M239.4,541.4 L247.6,543.6 M239.9,539.9 L239.0,543.0 M248.0,542.0 L247.1,545.1 M222.4,592.3 L230.6,593.7 M222.6,590.7 L222.1,593.8 M230.9,592.2 L230.4,595.3" fill="none" stroke="#b63523" stroke-width="1"/>
<path d="M857.8,478.8 l4.500,0 l-4.500,6 l4.500,0 z" fill="#ffd800" stroke="#e09000" stroke-width=".4"/>
<path d="M1064.3,464.5 l4.500,0 l-4.500,6 l4.500,0 z" fill="#ffd800" stroke="#e09000" stroke-width=".4"/>
<g font-family='"Liberation Sans", sans-serif' font-size="9.5" fill="#000">
<text x="716.5" y="219.5" text-anchor="middle">450 cm</text>
<text transform="translate(1225.5,358) rotate(90)" text-anchor="middle">120 cm</text>
<text transform="translate(208,503) rotate(-90)" text-anchor="middle">250 cm</text>
<text transform="translate(345,787) rotate(180)" text-anchor="middle">120 cm</text>
</g>
<circle cx="717.0" cy="222.5" r="1.4" fill="#000090"/>
<circle cx="1223.5" cy="358.0" r="1.4" fill="#000090"/>
<circle cx="210.5" cy="503.0" r="1.4" fill="#000090"/>
<circle cx="345.5" cy="785.5" r="1.4" fill="#000090"/>
<circle cx="480.5" cy="638.0" r="1.4" fill="#000090"/>
<circle cx="852.0" cy="493.5" r="1.4" fill="#000090"/>
</g>
<rect x="152" y="73" width="1128" height="20" fill="#dcdcdc"/>
<rect x="152" y="73" width="1128" height="1" fill="#6a6a6a"/>
<rect x="152" y="92" width="1128" height="1" fill="#6a6a6a"/><rect x="152" y="91" width="1128" height="1" fill="#f4f4f4"/>
<rect x="152" y="93" width="19" height="822" fill="#dcdcdc"/>
<rect x="152" y="73" width="1.5" height="860" fill="#7a7a7a"/>
<rect x="170" y="93" width="1" height="822" fill="#f4f4f4"/><rect x="171" y="93" width="1" height="822" fill="#6a6a6a"/>
<rect x="153.5" y="74" width="16.5" height="17" fill="#c4c4c4"/><rect x="170" y="74" width="1.5" height="17" fill="#f4f4f4"/>
<path d="M155.5,77.5H169 M156.5,76V89" stroke="#8a8a8a" stroke-width="1" stroke-dasharray="1 1" fill="none"/>
<path d="M159.5,80.5L163.5,84.5 M164,81V85H160" stroke="#111" stroke-width="1.2" fill="none"/>
<path d="M176.5,83V90M187.5,86V90M199.5,83V90M210.5,86V90M221.5,83V90M232.5,86V90M244.5,83V90M255.5,86V90M266.5,74V90M277.5,86V90M289.5,83V90M300.5,86V90M311.5,83V90M322.5,86V90M334.5,83V90M345.5,86V90M356.5,83V90M367.5,86V90M379.5,74V90M390.5,86V90M401.5,83V90M412.5,86V90M424.5,83V90M435.5,86V90M447.5,83V90M458.5,86V90M469.5,83V90M480.5,86V90M492.5,74V90M503.5,86V90M514.5,83V90M525.5,86V90M537.5,83V90M548.5,86V90M559.5,83V90M570.5,86V90M582.5,83V90M593.5,86V90M604.5,74V90M615.5,86V90M627.5,83V90M638.5,86V90M649.5,83V90M660.5,86V90M672.5,83V90M683.5,86V90M694.5,83V90M705.5,86V90M717.5,74V90M728.5,86V90M739.5,83V90M750.5,86V90M762.5,83V90M773.5,86V90M784.5,83V90M795.5,86V90M807.5,83V90M818.5,86V90M829.5,74V90M840.5,86V90M852.5,83V90M863.5,86V90M874.5,83V90M885.5,86V90M897.5,83V90M908.5,86V90M919.5,83V90M930.5,86V90M942.5,74V90M953.5,86V90M964.5,83V90M975.5,86V90M987.5,83V90M998.5,86V90M1009.5,83V90M1020.5,86V90M1032.5,83V90M1043.5,86V90M1054.5,74V90M1065.5,86V90M1077.5,83V90M1088.5,86V90M1099.5,83V90M1110.5,86V90M1122.5,83V90M1133.5,86V90M1144.5,83V90M1155.5,86V90M1167.5,74V90M1178.5,86V90M1189.5,83V90M1200.5,86V90M1212.5,83V90M1223.5,86V90M1234.5,83V90M1245.5,86V90M1257.5,83V90M897.5,74V90" stroke="#000" stroke-width="1" fill="none" shape-rendering="crispEdges"/>
<g font-family='"Liberation Sans", sans-serif' font-size="8.800" fill="#1a1a1a"><text x="265" y="83.5" text-anchor="end">-2000</text><text x="378" y="83.5" text-anchor="end">-1500</text><text x="491" y="83.5" text-anchor="end">-1000</text><text x="603" y="83.5" text-anchor="end">-500</text><text x="716" y="83.5" text-anchor="end">0</text><text x="828" y="83.5" text-anchor="end">500</text><text x="941" y="83.5" text-anchor="end">1000</text><text x="1053" y="83.5" text-anchor="end">1500</text><text x="1166" y="83.5" text-anchor="end">2000</text></g>
<path d="M162,98.5H170M165,110.5H170M162,121.5H170M165,132.5H170M162,143.5H170M165,155.5H170M153,166.5H170M165,177.5H170M162,188.5H170M165,200.5H170M162,211.5H170M165,222.5H170M162,233.5H170M165,245.5H170M162,256.5H170M165,267.5H170M153,278.5H170M165,290.5H170M162,301.5H170M165,312.5H170M162,323.5H170M165,335.5H170M162,346.5H170M165,357.5H170M162,368.5H170M165,380.5H170M153,391.5H170M165,402.5H170M162,413.5H170M165,425.5H170M162,436.5H170M165,447.5H170M162,458.5H170M165,470.5H170M162,481.5H170M165,492.5H170M153,503.5H170M165,515.5H170M162,526.5H170M165,537.5H170M162,548.5H170M165,560.5H170M162,571.5H170M165,582.5H170M162,593.5H170M165,605.5H170M153,616.5H170M165,627.5H170M162,638.5H170M165,650.5H170M162,661.5H170M165,672.5H170M162,683.5H170M165,695.5H170M162,706.5H170M165,717.5H170M153,728.5H170M165,740.5H170M162,751.5H170M165,762.5H170M162,773.5H170M165,785.5H170M162,796.5H170M165,807.5H170M162,818.5H170M165,830.5H170M153,841.5H170M165,852.5H170M162,863.5H170M165,875.5H170M162,886.5H170M165,897.5H170M162,908.5H170" stroke="#000" stroke-width="1" fill="none" shape-rendering="crispEdges"/>
<g font-family='"Liberation Sans", sans-serif' font-size="8.800" fill="#1a1a1a"><text transform="translate(161.5,165) rotate(-90)" text-anchor="start">1500</text><text transform="translate(161.5,277) rotate(-90)" text-anchor="start">1000</text><text transform="translate(161.5,390) rotate(-90)" text-anchor="start">500</text><text transform="translate(161.5,502) rotate(-90)" text-anchor="start">0</text><text transform="translate(161.5,615) rotate(-90)" text-anchor="start">500</text><text transform="translate(161.5,727) rotate(-90)" text-anchor="start">1000</text><text transform="translate(161.5,840) rotate(-90)" text-anchor="start">1500</text></g>
</svg>
<div class="abs" id="title">
<div class="abs" style="left:0;top:0;width:1280px;height:20px;background:radial-gradient(ellipse 19px 10px at 482px 16px,rgba(160,200,232,0.95) 0%,rgba(160,200,232,0.76) 45%,rgba(160,200,232,0) 100%),
radial-gradient(ellipse 19px 10px at 555px 16px,rgba(160,200,224,0.90) 0%,rgba(160,200,224,0.72) 45%,rgba(160,200,224,0) 100%),
radial-gradient(ellipse 19px 10px at 707px 16px,rgba(168,204,232,0.95) 0%,rgba(168,204,232,0.76) 45%,rgba(168,204,232,0) 100%),
radial-gradient(ellipse 23px 12px at 936px 16px,rgba(112,144,208,0.95) 0%,rgba(112,144,208,0.76) 45%,rgba(112,144,208,0) 100%),
radial-gradient(ellipse 19px 11px at 1007px 16px,rgba(160,200,232,0.95) 0%,rgba(160,200,232,0.76) 45%,rgba(160,200,232,0) 100%),
radial-gradient(ellipse 28px 11px at 1086px 15px,rgba(128,168,232,0.95) 0%,rgba(128,168,232,0.76) 45%,rgba(128,168,232,0) 100%),
radial-gradient(ellipse 28px 9px at 335px 17px,rgba(150,145,175,0.75) 0%,rgba(150,145,175,0.60) 45%,rgba(150,145,175,0) 100%),
radial-gradient(ellipse 26px 8px at 262px 15px,rgba(40,60,50,0.50) 0%,rgba(40,60,50,0.40) 45%,rgba(40,60,50,0) 100%),
radial-gradient(ellipse 22px 8px at 790px 16px,rgba(40,48,96,0.70) 0%,rgba(40,48,96,0.56) 45%,rgba(40,48,96,0) 100%),
radial-gradient(ellipse 18px 7px at 866px 17px,rgba(40,48,96,0.60) 0%,rgba(40,48,96,0.48) 45%,rgba(40,48,96,0) 100%),
radial-gradient(ellipse 16px 9px at 1150px 14px,rgba(80,90,100,0.50) 0%,rgba(80,90,100,0.40) 45%,rgba(80,90,100,0) 100%),
radial-gradient(ellipse 60px 14px at 630px 11px,rgba(46,52,62,0.90) 0%,rgba(46,52,62,0.72) 45%,rgba(46,52,62,0) 100%),
linear-gradient(90deg,#2a3038 0%,#14181e 22%,#0f1318 100%)"></div>
<div class="abs" style="left:-60px;top:-8px;width:340px;height:36px;background:radial-gradient(ellipse 170px 18px at 150px 18px,rgba(232,236,240,.96) 0%,rgba(214,219,225,.92) 40%,rgba(160,167,176,.68) 68%,rgba(100,108,118,.3) 85%,rgba(90,96,104,0) 100%)"></div>
<div class="abs" style="left:0;top:20px;width:1280px;height:1px;background:linear-gradient(90deg,#c8ccd2 0,#b0b6be 200px,#8a9098 320px,#9aa4b0 100%)"></div>
<div class="abs" style="left:0;top:21px;width:1280px;height:1px;background:#2c2e32"></div>
<svg class="abs" style="left:1px;top:2px" width="16" height="18" viewBox="0 0 16 18"><rect x="8.500" y="5" width="7.500" height="6.500" fill="#fff"/><text x="8.800" y="10.800" font-size="6.800" font-weight="bold" fill="#15158a" font-family="Liberation Sans" textLength="7" lengthAdjust="spacingAndGlyphs">13</text><path d="M1,8.500L4,6L14.500,1.500L15.500,2.500L12,5L5,8L2,9.500Z" fill="#15158a"/><path d="M.5,8.500L3,7L4,8.500L1.500,9.500Z" fill="#c8c870"/><path d="M2,10.500H8.500M2,12.500H16M2,14.500H16M2,16.500H16" stroke="#111" stroke-width="1"/><path d="M4,11.500H9M6,13.500H14M4,15.500H12" stroke="#e85060" stroke-width="1"/><path d="M2,11.500H4M2,13.500H6M14,13.500H16M2,15.500H4M12,15.500H16" stroke="#f4d8dc" stroke-width="1"/></svg>
<span class="abs" style="left:22px;top:3px;font-size:12px;white-space:pre;color:#000;letter-spacing:-.05px">WinTrack  V13.0 - [track1]</span>
<!-- window buttons -->
<div class="abs" style="left:1173px;top:-4px;width:105px;height:22px;border:1px solid rgba(255,255,255,.55);border-radius:0 0 5px 5px;box-shadow:0 0 0 1px rgba(0,0,0,.5) inset"></div>
<div class="abs" style="left:1175px;top:0;width:27px;height:17px;border-radius:0 0 0 4px;background:linear-gradient(#b8bcc2 0%,#9ea3aa 45%,#5e646d 50%,#6e747c 100%)"></div>
<div class="abs" style="left:1203px;top:0;width:26px;height:17px;background:linear-gradient(#b8bcc2 0%,#9ea3aa 45%,#5e646d 50%,#7e8890 100%)"></div>
<div class="abs" style="left:1230px;top:0;width:46px;height:17px;border-radius:0 0 4px 0;background:linear-gradient(#e8a898 0%,#d8806c 45%,#c2432a 52%,#cc5a3e 80%,#d8846c 100%)"></div>
<div class="abs" style="left:1184px;top:9px;width:11px;height:4px;background:#fff;border:1px solid #555;border-radius:1px"></div>
<svg class="abs" style="left:1208px;top:1px" width="16" height="14" viewBox="0 0 16 14"><rect x="4.5" y="1.5" width="9" height="8" fill="none" stroke="#444" stroke-width="3"/><rect x="4.5" y="1.5" width="9" height="8" fill="none" stroke="#fff" stroke-width="1.6"/><rect x="1.5" y="4.5" width="9" height="8" fill="#888" stroke="#444" stroke-width="3"/><rect x="1.5" y="4.5" width="9" height="8" fill="#6a7078" stroke="#fff" stroke-width="1.6"/></svg>
<svg class="abs" style="left:1246px;top:2px" width="14" height="12" viewBox="0 0 14 12"><path d="M2,2L12,10M12,2L2,10" stroke="#5a2a20" stroke-width="4.4" stroke-linecap="square"/><path d="M2,2L12,10M12,2L2,10" stroke="#fff" stroke-width="2.6" stroke-linecap="square"/></svg>
</div>
<div class="abs" id="menu"><span style="left:31px;letter-spacing:-0.45px">File</span><span style="left:62px;letter-spacing:0.29px">Modifica</span><span style="left:123px;letter-spacing:-0.33px">Visualizza</span><span style="left:187px;letter-spacing:-0.17px">Inserisci</span><span style="left:243px;letter-spacing:-0.50px">Extra</span><span style="left:282px;letter-spacing:0.43px">Moduli</span><span style="left:334px;letter-spacing:0.04px">Opzioni</span><span style="left:389px;letter-spacing:-0.24px">Finestra</span><span style="left:444px;letter-spacing:-0.70px">?</span><svg class="abs" style="left:7px;top:1px" width="16" height="16" viewBox="0 0 16 16"><path d="M.5,.5H15.500V10.500L10,15.500H.5Z" fill="#f4f6f2" stroke="#3a4a40" stroke-width="1"/><path d="M1,1H15V4L13,6L10,3L7,5L4,3L1,6Z" fill="#5aa25a"/><path d="M3,3L5,2M8,2.500L10,2M12,3L13.500,2.500" stroke="#1a6a2a" stroke-width="1"/><path d="M2,8C5,5 9,7 14,5.500M2,11C5,8 9,10 13,8M2,14C4,11.500 7,13 9,12" stroke="#39423c" stroke-width="1.100" fill="none" stroke-dasharray="2.500 1.200"/></svg><div class="abs" style="left:1223px;top:1px;width:18px;height:18px;border:1px solid #b9c0cc;background:linear-gradient(#f2f5fa,#dde3ef 50%,#e6eaf3);border-radius:1px"></div><div class="abs" style="left:1242px;top:1px;width:18px;height:18px;border:1px solid #b9c0cc;background:linear-gradient(#f2f5fa,#dde3ef 50%,#e6eaf3);border-radius:1px"></div><div class="abs" style="left:1261px;top:1px;width:18px;height:18px;border:1px solid #b9c0cc;background:linear-gradient(#f2f5fa,#dde3ef 50%,#e6eaf3);border-radius:1px"></div><div class="abs" style="left:1228px;top:12px;width:6px;height:2px;background:#4d5a6e"></div><svg class="abs" style="left:1246px;top:5px" width="10" height="10" viewBox="0 0 10 10"><path d="M3.5,3V1H9V6H7" fill="none" stroke="#4d5a6e" stroke-width="1.4"/><rect x="1" y="4" width="5.5" height="4.5" fill="none" stroke="#4d5a6e" stroke-width="1.4"/></svg><svg class="abs" style="left:1266px;top:6px" width="9" height="9" viewBox="0 0 9 9"><path d="M1,1L8,8M8,1L1,8" stroke="#4d5a6e" stroke-width="1.8"/></svg></div>
<div class="abs" style="left:3px;top:46px;width:2px;height:24px;border-left:1px solid #fff;border-right:1px solid #a0a0a0"></div>
<svg class="abs" style="left:17px;top:49px" width="16" height="16" viewBox="0 0 16 16"><path d="M2.5,1.5H10L13.5,5V14.5H2.5Z" fill="#fff" stroke="#000" stroke-width="1.2"/><path d="M10,1.5V5H13.5" fill="none" stroke="#000" stroke-width="1"/></svg>
<svg class="abs" style="left:40px;top:49px" width="16" height="16" viewBox="0 0 16 16"><path d="M1,14.5V5H5.5L7,6.5H12V9" fill="#f5f0a8" stroke="#000" stroke-width="1"/><path d="M1,14.5L4.5,9H15.5L12,14.5Z" fill="#8a8a18" stroke="#000" stroke-width="1"/><path d="M9,3C11,1 13.5,1.5 14.5,4" fill="none" stroke="#000" stroke-width="1.1"/><path d="M15.5,2L14.8,5L12,4.3Z" fill="#000"/></svg>
<svg class="abs" style="left:63px;top:49px" width="16" height="16" viewBox="0 0 16 16"><rect x="1" y="1.5" width="14" height="13.5" fill="#7e7e28" stroke="#000" stroke-width="1.2"/><rect x="4" y="2" width="8" height="6" fill="#ececd6"/><rect x="4" y="10" width="8.5" height="5" fill="#000"/><rect x="9.5" y="11" width="2" height="3" fill="#ececd6"/></svg>
<div class="abs" style="left:84px;top:49px;width:1px;height:18px;background:#909090;box-shadow:1px 0 0 #e0e0e0"></div>
<svg class="abs" style="left:93px;top:49px" width="16" height="16" viewBox="0 0 16 16"><path d="M1.5,1.5H8L11,4.5V14.5H1.5Z" fill="#fff" stroke="#000" stroke-width="1.2"/><path d="M8,1.5V4.5H11" fill="none" stroke="#000"/><path d="M11.5,11.5L15,15" stroke="#000" stroke-width="2"/><circle cx="9.5" cy="9.5" r="3.2" fill="#c8f0f0" stroke="#000" stroke-width="1.1"/></svg>
<svg class="abs" style="left:116px;top:49px" width="16" height="16" viewBox="0 0 16 16"><path d="M4,6L5.5,1.5H13L11.5,6Z" fill="#fff" stroke="#000"/><path d="M6.5,3.3H11.5M6,4.8H11" stroke="#000" stroke-width=".7"/><path d="M1,7.5Q1,6 3,6H13Q15,6 15,7.5V11.5H1Z" fill="#fff" stroke="#000" stroke-width="1.1"/><path d="M1,9.5H15" stroke="#000"/><rect x="2.5" y="11.5" width="11" height="3" fill="#fff" stroke="#000"/><path d="M9,8H13" stroke="#b0b000" stroke-width="1"/></svg>
<svg class="abs" style="left:139px;top:49px" width="16" height="16" viewBox="0 0 16 16"><rect x="1" y="1.5" width="11" height="8" fill="#fff" stroke="#000" stroke-width="1.3"/><path d="M7,7L8,5H14.5L13.5,7.5Z" fill="#fff" stroke="#000" stroke-width=".9"/><rect x="5" y="8" width="10.5" height="3" fill="#fff" stroke="#000"/><path d="M5,12.5H15.5M6,14.5L8,12.5M14.5,14.5L12.5,12.5M4,14.8H16" stroke="#000" stroke-width="1"/></svg>
<svg class="abs" style="left:162px;top:49px" width="16" height="16" viewBox="0 0 16 16"><rect x="3.5" y="1" width="9" height="14" fill="#fff" stroke="#000" stroke-width="1.4"/><path d="M5.5,3.5H10.5M5.5,5.5H10.5M5.5,7.5H10.5M5.5,9.5H10.5M5.5,11.5H10.5" stroke="#15157a" stroke-width="1.1" stroke-dasharray="1.2 .8 4 0"/></svg>
<div class="abs" style="left:184px;top:49px;width:1px;height:18px;background:#909090;box-shadow:1px 0 0 #e0e0e0"></div>
<div class="abs" style="left:192px;top:49px;width:1px;height:18px;background:#909090;box-shadow:1px 0 0 #e0e0e0"></div>
<svg class="abs" style="left:202px;top:50px" width="16" height="16" viewBox="0 0 16 16"><rect x="0" y="1" width="15" height="14" fill="#30e0e8"/><rect x="0" y="1" width="4" height="3" fill="#e8f040"/><rect x="0" y="10" width="15" height="5" fill="#2a8a2a"/><path d="M0,11L4.5,5L8,10L10,6.5L14,11.5Z" fill="#fff" stroke="#202020" stroke-width=".9"/><path d="M2,11L4.5,8L7.5,12.5L10,9.5L13,12Z" fill="#2a7a2a"/></svg>
<div class="abs" style="left:223px;top:49px;width:1px;height:18px;background:#909090;box-shadow:1px 0 0 #e0e0e0"></div>
<svg class="abs" style="left:232px;top:49px" width="16" height="16" viewBox="0 0 16 16"><path d="M9.5,9.5L14.5,14.5" stroke="#10107a" stroke-width="2.6"/><path d="M10,9.5L14.5,14" stroke="#7aa0e0" stroke-width=".9"/><circle cx="6.5" cy="6.5" r="5" fill="#fff" stroke="#000" stroke-width="1.3"/><path d="M4,6.5H9" stroke="#000" stroke-width="1.8"/></svg>
<svg class="abs" style="left:255px;top:49px" width="16" height="16" viewBox="0 0 16 16"><path d="M9.5,9.5L14.5,14.5" stroke="#10107a" stroke-width="2.6"/><path d="M10,9.5L14.5,14" stroke="#7aa0e0" stroke-width=".9"/><circle cx="6.5" cy="6.5" r="5" fill="#fff" stroke="#000" stroke-width="1.3"/><path d="M3.8,6.5H9.2M6.5,3.8V9.2" stroke="#000" stroke-width="1.8"/></svg>
<svg class="abs" style="left:278px;top:49px" width="16" height="16" viewBox="0 0 16 16"><path d="M7,1.5H15V9.5H12" fill="#fff" stroke="#000" stroke-width="1.2"/><path d="M9,11L13.5,15.5" stroke="#10107a" stroke-width="2.6"/><path d="M9.5,11L13.5,15" stroke="#7aa0e0" stroke-width=".9"/><circle cx="6" cy="8" r="5" fill="#fff" stroke="#000" stroke-width="1.3"/><path d="M3.3,8H8.7M6,5.3V10.7" stroke="#000" stroke-width="1.8"/></svg>
<svg class="abs" style="left:301px;top:49px" width="16" height="16" viewBox="0 0 16 16"><path d="M1,4V1H4M12,1H15V4M1,12V15H4M15,12V15H12" fill="none" stroke="#000" stroke-width="1.3"/><path d="M1,1L4,4M15,1L12,4M1,15L4,12" stroke="#000" stroke-width="1"/><path d="M10.5,10.5L14.5,14.5" stroke="#10107a" stroke-width="2.4"/><circle cx="8" cy="8" r="4.3" fill="#fff" stroke="#000" stroke-width="1.3"/><path d="M5.8,8H10.2" stroke="#000" stroke-width="1.8"/></svg>
<div class="abs" style="left:323px;top:49px;width:1px;height:18px;background:#909090;box-shadow:1px 0 0 #e0e0e0"></div>
<svg class="abs" style="left:332px;top:50px" width="16" height="16" viewBox="0 0 16 16"><path d="M5,9C6,5 12,4 13,9C13.3,10.5 13,11 12.5,11.5" fill="none" stroke="#15157a" stroke-width="1.6"/><path d="M1.5,7.5L7,6L6.5,11.5Z" fill="#15157a"/></svg>
<svg class="abs" style="left:355px;top:50px" width="16" height="16" viewBox="0 0 16 16"><path d="M11,9C10,5 4,4 3,9C2.7,10.5 3,11 3.5,11.5" fill="none" stroke="#9a9a9a" stroke-width="1.6"/><path d="M14.5,7.5L9,6L9.5,11.5Z" fill="#9a9a9a"/></svg>
<svg class="abs" style="left:378px;top:49px" width="16" height="16" viewBox="0 0 16 16"><path d="M2,1H10.5L14,4.5V15H2Z" fill="#8a1020" stroke="#000" stroke-width="1.4"/><path d="M10.5,1V4.5H14" fill="#fff" stroke="#000" stroke-width="1"/><path d="M3.5,5.5H9M3.5,8.5H12.5M3.5,11.5H12.5" stroke="#fff" stroke-width="1.5"/></svg>
<svg class="abs" style="left:401px;top:49px" width="16" height="16" viewBox="0 0 16 16"><rect x="1.5" y="1.5" width="12" height="13" fill="#e2e2e2" stroke="#9a9a9a" stroke-width="1.4"/><path d="M1.5,8H13.5M7.5,1.5V14.5" stroke="#9a9a9a" stroke-width="1.6"/><path d="M5,3L10,6M10,3L5,6M5,10L10,13M10,10L5,13" stroke="#9a9a9a" stroke-width=".9"/></svg>
<svg class="abs" style="left:424px;top:49px" width="16" height="16" viewBox="0 0 16 16"><rect x="1.5" y="2" width="12" height="12.5" fill="#e8e8e8" stroke="#9a9a9a" stroke-width="1.4"/><path d="M1.5,4H13.5M1.5,13H13.5" stroke="#9a9a9a" stroke-width="1.2"/><path d="M7.5,4V13" stroke="#9a9a9a" stroke-width="2.4" stroke-dasharray="1 1"/></svg>
<svg class="abs" style="left:447px;top:49px" width="16" height="16" viewBox="0 0 16 16"><path d="M5,1L9.5,10.5M11,1L6.5,10.5" stroke="#9a9a9a" stroke-width="1.3" fill="none"/><circle cx="5.2" cy="12.3" r="2.1" fill="none" stroke="#9a9a9a" stroke-width="1.2"/><circle cx="10.8" cy="12.3" r="2.1" fill="none" stroke="#9a9a9a" stroke-width="1.2"/></svg>
<svg class="abs" style="left:470px;top:49px" width="16" height="16" viewBox="0 0 16 16"><path d="M1.5,1.5H6.5L8.5,3.5V10.5H1.5Z" fill="#ececec" stroke="#9a9a9a" stroke-width="1.2"/><path d="M6.5,5.5H12L14.5,8V14.5H6.5Z" fill="#ececec" stroke="#9a9a9a" stroke-width="1.2"/><path d="M3,4.5H6M3,6.5H5.5M8.5,9.5H12.5M8.5,11.5H12.5" stroke="#9a9a9a" stroke-width="1"/></svg>
<svg class="abs" style="left:493px;top:49px" width="16" height="16" viewBox="0 0 16 16"><rect x="1" y="2.5" width="12" height="12" rx="1.5" fill="#9a9a9a"/><rect x="4.5" y="1" width="5" height="3" rx="1" fill="#9a9a9a" stroke="#c8c8c8" stroke-width=".6"/><rect x="7.5" y="8.5" width="7.5" height="6.5" fill="#ececec" stroke="#9a9a9a" stroke-width="1.2"/><path d="M9,11H13M9,13H12" stroke="#9a9a9a" stroke-width="1"/></svg>
<div class="abs" style="left:515px;top:49px;width:1px;height:18px;background:#909090;box-shadow:1px 0 0 #e0e0e0"></div>
<svg class="abs" style="left:524px;top:49px" width="16" height="16" viewBox="0 0 16 16"><path d="M1,2.5L6,9.5V15M10,9.5V15M14.5,2.5L10,9.5M6,9.5 M1,2.5H4 M12,2.5H14.5 M4,15H7.5" fill="none" stroke="#9a9a9a" stroke-width="1.2"/><path d="M5,3.5H10.5M9,2L10.8,3.5L9,5M15.2,9V15" stroke="#9a9a9a" stroke-width="1" fill="none"/></svg>
<svg class="abs" style="left:547px;top:49px" width="16" height="16" viewBox="0 0 16 16"><path d="M4.5,2C7,5 9,9 9.5,14.5H7" fill="none" stroke="#000" stroke-width="1.5"/><path d="M3.2,1L5.5,2.5" stroke="#e02020" stroke-width="1.2"/></svg>
<div class="abs" style="left:567px;top:48px;width:23px;height:20px;border:1px solid #6f6f6f;border-radius:3px;background:linear-gradient(#d4d4d4,#e6e6e6);box-shadow:inset 0 1px 1px rgba(0,0,0,.18)"></div>
<svg class="abs" style="left:571px;top:49px" width="16" height="16" viewBox="0 0 16 16"><path d="M3.5,14.5H5.5C6.5,9 8,4 12,2" fill="none" stroke="#000" stroke-width="1.5"/><path d="M10.5,2.2L13.5,1.2" stroke="#e02020" stroke-width="1.2"/></svg>
<div class="abs" style="left:593px;top:49px;width:1px;height:18px;background:#909090;box-shadow:1px 0 0 #e0e0e0"></div>
<svg class="abs" style="left:601px;top:49px" width="16" height="16" viewBox="0 0 16 16"><path d="M.5,2.5H14V5" fill="none" stroke="#9a9a9a" stroke-width="1.1"/><rect x="4" y="7" width="11" height="7.5" rx="1" fill="#e8e8e8" stroke="#9a9a9a" stroke-width="1.4"/><path d="M6,10H9V12H6ZM10.5,10H13V12H10.5Z" fill="none" stroke="#9a9a9a" stroke-width="1"/></svg>
<svg class="abs" style="left:624px;top:49px" width="16" height="16" viewBox="0 0 16 16"><path d="M0,1H7V4H11V8H14.5V15H7.5V11.5H3.5V7.5H0Z" fill="#9a9a9a"/></svg>
<svg class="abs" style="left:647px;top:49px" width="16" height="16" viewBox="0 0 16 16"><path d="M0,1H7V4H11V8H14.5V15H7.5V11.5H3.5V7.5H0Z" fill="#9a9a9a"/></svg>
<div class="abs" style="left:669px;top:49px;width:1px;height:18px;background:#909090;box-shadow:1px 0 0 #e0e0e0"></div>
<svg class="abs" style="left:678px;top:49px" width="16" height="16" viewBox="0 0 16 16"><path d="M8,1V15M1,9H15M3,12L13,2" stroke="#9a9a9a" stroke-width="1.2"/><path d="M6,3L8,.5L10,3ZM6,13L8,15.5L10,13ZM13,7L15.5,9L13,11Z" fill="#9a9a9a"/><path d="M1,9L4,6.5H10V9" fill="none" stroke="#9a9a9a" stroke-width="1.3"/></svg>
<svg class="abs" style="left:701px;top:49px" width="16" height="16" viewBox="0 0 16 16"><path d="M5.5,1V8M1,4.5H10" stroke="#9a9a9a" stroke-width="1.2"/><path d="M3.5,2.5L5.5,.3L7.5,2.5ZM2.5,2.7L.5,4.5L2.5,6.3Z" fill="#9a9a9a"/><rect x="4.5" y="7" width="10.5" height="7.5" rx="1" fill="#e8e8e8" stroke="#9a9a9a" stroke-width="1.4"/><path d="M6.5,10H9.5V12H6.5ZM11,10H13.5V12H11Z" fill="none" stroke="#9a9a9a" stroke-width="1"/></svg>
<svg class="abs" style="left:724px;top:49px" width="16" height="16" viewBox="0 0 16 16"><path d="M0,1H4V2.5H6.5V6H0Z" fill="#9a9a9a"/><path d="M11,1H15V5.5H11ZM9,6.5H12.5V5.5" fill="none" stroke="#9a9a9a" stroke-width="1.1"/><text x="0.5" y="15" font-size="6.5" font-family="Liberation Sans" font-weight="bold" fill="#9a9a9a" letter-spacing=".3">180&#176;</text></svg>
<div class="abs" style="left:746px;top:49px;width:1px;height:18px;background:#909090;box-shadow:1px 0 0 #e0e0e0"></div>
<svg class="abs" style="left:755px;top:49px" width="16" height="16" viewBox="0 0 16 16"><path d="M1,10H3L6,1.5H8.5M2.5,13V15M2.5,13H4.5" fill="none" stroke="#9a9a9a" stroke-width="1.2"/><path d="M8,3L12,6.5M12.5,3.5V7H9" fill="none" stroke="#9a9a9a" stroke-width="1.2"/><rect x="8.5" y="9" width="6" height="6" fill="#9a9a9a"/></svg>
<svg class="abs" style="left:778px;top:49px" width="16" height="16" viewBox="0 0 16 16"><path d="M.5,7H2L3.5,1M2.5,9.5H4L6.5,1.5H8.5M3,13V15M3,13H5" fill="none" stroke="#9a9a9a" stroke-width="1.1"/><path d="M8,3L12,6.5M12.5,3.5V7H9.5" fill="none" stroke="#9a9a9a" stroke-width="1.2"/><rect x="11" y="9" width="2.6" height="6" fill="#9a9a9a"/></svg>
<svg class="abs" style="left:801px;top:49px" width="16" height="16" viewBox="0 0 16 16"><path d="M0,8.5H15.5M7.5,6V11" stroke="#9a9a9a" stroke-width="1.2"/></svg>
<svg class="abs" style="left:824px;top:49px" width="16" height="16" viewBox="0 0 16 16"><path d="M1,2H3M3,4V2M2.5,8L6,12.5H10M13,11V14H15.5" fill="none" stroke="#9a9a9a" stroke-width="1.1" stroke-dasharray="2.4 1"/><path d="M1,7.5L2.8,4.5L4.5,7.5ZM9.5,11L12.5,12.7L9.5,14.3Z" fill="#9a9a9a"/></svg>
<svg class="abs" style="left:847px;top:49px" width="16" height="16" viewBox="0 0 16 16"><path d="M0,7.5H8M0,10.5H5.5M5.5,10.5V13M11,6.5V8.5H15.5" fill="none" stroke="#9a9a9a" stroke-width="1.2"/><path d="M7,5.5L10.5,7.5L7,9.5Z" fill="#9a9a9a"/></svg>
<div class="abs" style="left:869px;top:49px;width:1px;height:18px;background:#909090;box-shadow:1px 0 0 #e0e0e0"></div>
<div class="abs" style="left:877px;top:49px;width:1px;height:18px;background:#909090;box-shadow:1px 0 0 #e0e0e0"></div>
<svg class="abs" style="left:886px;top:49px" width="16" height="16" viewBox="0 0 16 16"><path d="M.5,10.5V12H13.5V14" fill="none" stroke="#9a9a9a" stroke-width="1.1"/><rect x="8.5" y="1.5" width="4.5" height="4.5" fill="none" stroke="#9a9a9a" stroke-width="1.1"/><path d="M9,6.5L5.5,10M5.2,7.5V10.3H8" fill="none" stroke="#9a9a9a" stroke-width="1.1"/></svg>
<svg class="abs" style="left:909px;top:49px" width="16" height="16" viewBox="0 0 16 16"><path d="M.5,10.5V12H13.5V14" fill="none" stroke="#9a9a9a" stroke-width="1.1"/><rect x="8.5" y="1.5" width="4.5" height="4.5" fill="none" stroke="#9a9a9a" stroke-width="1.1"/></svg>
<svg class="abs" style="left:932px;top:49px" width="16" height="16" viewBox="0 0 16 16"><path d="M.5,10.5V12H13.5V14" fill="none" stroke="#9a9a9a" stroke-width="1.1"/><rect x="8.5" y="1.5" width="4.5" height="4.5" fill="none" stroke="#9a9a9a" stroke-width="1.1"/><path d="M9,6.5L5.5,10M5.2,7.5V10.3H8" fill="none" stroke="#9a9a9a" stroke-width="1.1"/><text x="-.5" y="9" font-size="10" font-weight="bold" font-family="Liberation Sans" fill="#9a9a9a">?</text></svg>
<div class="abs" style="left:954px;top:49px;width:1px;height:18px;background:#909090;box-shadow:1px 0 0 #e0e0e0"></div>
<svg class="abs" style="left:964px;top:49px" width="16" height="16" viewBox="0 0 16 16"><rect x="1" y="1.5" width="13.5" height="13" fill="none" stroke="#9a9a9a" stroke-width="1" stroke-dasharray="1 1"/><path d="M7.5,1V5M7.5,15V11M1,8H4.5M14.5,8H11" stroke="#9a9a9a" stroke-width="1.1"/><path d="M5.5,3.5L7.5,6.5L9.5,3.5M5.5,12.5L7.5,9.5L9.5,12.5M3,6L6,8L3,10M12.5,6L9.5,8L12.5,10" fill="none" stroke="#9a9a9a" stroke-width="1"/></svg>
<div class="abs" style="left:985px;top:49px;width:1px;height:18px;background:#909090;box-shadow:1px 0 0 #e0e0e0"></div>
<div class="abs" style="left:993px;top:49px;width:1px;height:18px;background:#909090;box-shadow:1px 0 0 #e0e0e0"></div>
<svg class="abs" style="left:1002px;top:49px" width="16" height="16" viewBox="0 0 16 16"><path d="M1,1V12L3.8,9.5L6,14.5L8,13.5L5.8,8.8H9.5Z" fill="#000"/><text x="7.500" y="13" font-size="17" font-weight="bold" font-family="Liberation Serif" fill="#15157a" stroke="#15157a" stroke-width=".5">?</text></svg>
<div class="abs" style="left:1029px;top:44px;width:1px;height:28px;background:#a8a8a8"></div><div class="abs" style="left:1030px;top:44px;width:1px;height:28px;background:#fff"></div>
<div class="abs" style="left:29px;top:72px;width:1px;height:862px;background:#c8c8c8"></div><div class="abs" style="left:30px;top:72px;width:1px;height:862px;background:#9c9c9c"></div><div class="abs" style="left:31px;top:72px;width:1px;height:862px;background:#fdfdfd"></div>
<div class="abs" style="left:3px;top:77px;width:22px;height:2px;border-top:1px solid #a0a0a0;border-right:1px solid #a0a0a0"></div>
<div class="abs" style="left:0;top:513px;width:30px;height:1px;background:#a2a2a2"></div>
<svg class="abs" style="left:6px;top:89px;overflow:visible" width="17" height="17" viewBox="0 0 17 17"><path d="M1,4H9M5,0V8M2,1L8,7M8,1L2,7" stroke="#a4a4a4" stroke-width="1"/><path d="M6,7L9,4.5H12L13,3H16V5" fill="none" stroke="#a4a4a4" stroke-width="1"/><text x="0" y="16" font-size="6.500" font-weight="bold" font-family="Liberation Sans" fill="#a4a4a4" textLength="15.500" lengthAdjust="spacingAndGlyphs">FLEX</text></svg>
<svg class="abs" style="left:6px;top:112px;overflow:visible" width="17" height="17" viewBox="0 0 17 17"><path d="M0,1H8M1,3H7" stroke="#e8d060" stroke-width="1"/><path d="M3.5,2V8H.5" fill="none" stroke="#d02040" stroke-width="1.3"/><text x="5.5" y="9" font-size="7.5" font-weight="bold" font-family="Liberation Sans" fill="#000" textLength="8.5" lengthAdjust="spacingAndGlyphs">20</text><rect x="14.5" y="2.5" width="2" height="2" fill="#000"/><text x="0" y="16.5" font-size="6.8" font-weight="bold" font-family="Liberation Sans" fill="#000" textLength="15.5" lengthAdjust="spacingAndGlyphs">FLEX</text></svg>
<svg class="abs" style="left:6px;top:134px;overflow:visible" width="17" height="17" viewBox="0 0 17 17"><path d="M1,4H9M5,0V8M2,1L8,7M8,1L2,7" stroke="#a4a4a4" stroke-width="1"/><path d="M13,0V8L8,13M16,0V9L10,15M0,12H10M0,15H10M2,10V16M7,10V16" fill="none" stroke="#a4a4a4" stroke-width="1"/></svg>
<svg class="abs" style="left:6px;top:156px;overflow:visible" width="17" height="17" viewBox="0 0 17 17"><path d="M1,4H9M5,0V8M2,1L8,7M8,1L2,7" stroke="#a4a4a4" stroke-width="1"/><path d="M6,7C10,5 15,7 16,9C16,11 12,12 8,11C4,10 0,12 1,14C3,16 9,16 12,14C14,12 10,10 6,10" fill="none" stroke="#a4a4a4" stroke-width="1"/></svg>
<svg class="abs" style="left:6px;top:178px;overflow:visible" width="17" height="17" viewBox="0 0 17 17"><path d="M6,2L15,12" stroke="#000" stroke-width="2.6"/><path d="M6.5,3.2L14.3,11.8" stroke="#fff" stroke-width=".6" stroke-dasharray="1 1.3"/><path d="M10,1.5H12M14,3H15M13,6H15M12,.5V2" stroke="#333" stroke-width="1"/><path d="M0,12.5H3L5,9.5M3,12.5H11.5V15.5" fill="none" stroke="#000" stroke-width="1.4"/></svg>
<div class="abs" style="left:5px;top:200px;width:19px;height:1px;background:#a6a6a6;box-shadow:0 1px 0 #fafafa"></div>
<svg class="abs" style="left:6px;top:209px;overflow:visible" width="17" height="17" viewBox="0 0 17 17"><path d="M1,4H9M5,0V8M2,1L8,7M8,1L2,7" stroke="#e8e060" stroke-width="1"/><text x="3.5" y="12" font-size="5.5" font-weight="bold" font-family="Liberation Sans" fill="#101090">481m</text><path d="M0,14H17" stroke="#000" stroke-width="1.2"/></svg>
<svg class="abs" style="left:6px;top:232px;overflow:visible" width="17" height="17" viewBox="0 0 17 17"><path d="M1,4H9M5,0V8M2,1L8,7M8,1L2,7" stroke="#e8e060" stroke-width="1"/><rect x="3.5" y="8.5" width="12.5" height="6" fill="#fff" stroke="#000" stroke-width="1.2"/><path d="M10,6H12M13.5,6H15" stroke="#000" stroke-width="1"/><path d="M0.5,9.5V11M.5,12.5V14" stroke="#101090" stroke-width="1.6"/></svg>
<div class="abs" style="left:5px;top:253px;width:19px;height:1px;background:#a6a6a6;box-shadow:0 1px 0 #fafafa"></div>
<svg class="abs" style="left:6px;top:261px;overflow:visible" width="17" height="17" viewBox="0 0 17 17"><path d="M1,4H9M5,0V8M2,1L8,7M8,1L2,7" stroke="#e8e060" stroke-width="1"/><text x="1.5" y="16" font-size="17" font-weight="bold" font-family="Liberation Serif" fill="#15157a">A</text></svg>
<svg class="abs" style="left:6px;top:283px;overflow:visible" width="17" height="17" viewBox="0 0 17 17"><path d="M1,4H9M5,0V8M2,1L8,7M8,1L2,7" stroke="#e8e060" stroke-width="1"/><text x="8" y="7.5" font-size="7.5" font-weight="bold" font-family="Liberation Sans" fill="#15157a">10</text><path d="M6.5,9.5H17M11.5,9.5V16" stroke="#15157a" stroke-width="2"/></svg>
<svg class="abs" style="left:6px;top:305px;overflow:visible" width="17" height="17" viewBox="0 0 17 17"><path d="M1,4H9M5,0V8M2,1L8,7M8,1L2,7" stroke="#e8e060" stroke-width="1"/><path d="M4,11L10,5.5L16,11Z" fill="#e01818"/><rect x="5.5" y="11" width="10" height="5.5" fill="#30d8d8" stroke="#000" stroke-width="1.2"/><rect x="8" y="12.5" width="2" height="2.5" fill="#000"/><rect x="12" y="12.5" width="2" height="2.5" fill="#000"/></svg>
<svg class="abs" style="left:6px;top:326px;overflow:visible" width="17" height="17" viewBox="0 0 17 17"><path d="M1,4H9M5,0V8M2,1L8,7M8,1L2,7" stroke="#e8e060" stroke-width="1"/><path d="M1,11V6L5,4H16V11Z" fill="#20d840"/><circle cx="13" cy="3.5" r="3.2" fill="#c818c8"/><path d="M3,13C4,9 6,9 7,12C8,15 10,14 11,14H14" fill="none" stroke="#101090" stroke-width="1.2"/></svg>
<svg class="abs" style="left:6px;top:348px;overflow:visible" width="17" height="17" viewBox="0 0 17 17"><path d="M1,4H9M5,0V8M2,1L8,7M8,1L2,7" stroke="#e8e060" stroke-width="1"/><path d="M2.5,14.5V12H10.500V5.5H15.500" fill="none" stroke="#3a6a3a" stroke-width="1.3"/><path d="M2.500,13L4,14.500L2.500,16L1,14.500ZM15.500,4L17,5.500L15.500,7L14,5.500Z" fill="#000"/></svg>
<svg class="abs" style="left:6px;top:370px;overflow:visible" width="17" height="17" viewBox="0 0 17 17"><path d="M1,4H9M5,0V8M2,1L8,7M8,1L2,7" stroke="#e8e060" stroke-width="1"/><path d="M.5,16V11L3,12.500L6,11L9,12.500L12,11L16,7V16Z" fill="#e8e040" stroke="#000" stroke-width="1.1"/></svg>
<svg class="abs" style="left:6px;top:392px;overflow:visible" width="17" height="17" viewBox="0 0 17 17"><rect x=".5" y="1.500" width="16" height="14" fill="#30e0e0" stroke="#000" stroke-width="1.3"/><path d="M1,15V8L4,11L9,4L12,8L16,3V15Z" fill="#20d040"/><circle cx="8" cy="4" r="2.500" fill="#c0f060"/><path d="M1,15L5,8.500L9,15Z" fill="#a8a0b0"/><path d="M9,15L16,5V15Z" fill="#f4f4f4" stroke="#888" stroke-width=".5" stroke-dasharray="1 1"/><path d="M1,15L5,8.500L9,15L16,4.500" fill="none" stroke="#000" stroke-width="1"/></svg>
<svg class="abs" style="left:6px;top:414px;overflow:visible" width="17" height="17" viewBox="0 0 17 17"><path d="M4,3H10V14H4Z" fill="#000"/><path d="M5.5,4.500V13" stroke="#fff" stroke-width="1" stroke-dasharray="1 1.200"/><path d="M10,9L16,4M10,12L16,7M11,15L16,10.500" stroke="#223" stroke-width="1.300"/><path d="M0,14L16,1M2,16L16,4.500" stroke="#d02030" stroke-width="1"/></svg>
<svg class="abs" style="left:6px;top:436px;overflow:visible" width="17" height="17" viewBox="0 0 17 17"><path d="M5,1H13M5,1V15M5,7.500H11.500M2.500,15H7.500" stroke="#000" stroke-width="2.200" fill="none"/><path d="M5,2V14" stroke="#fff" stroke-width=".8" stroke-dasharray="1 1.200"/></svg>
<div class="abs" style="left:5px;top:458px;width:19px;height:1px;background:#a6a6a6;box-shadow:0 1px 0 #fafafa"></div>
<svg class="abs" style="left:6px;top:466px;overflow:visible" width="17" height="17" viewBox="0 0 17 17"><path d="M0,2H17M8.500,.5V3.500M8.500,5V13M.5,13V15.500H17" fill="none" stroke="#a4a4a4" stroke-width="1.100"/><path d="M6,7.500L8.500,4.500L11,7.500ZM6,10.500L8.500,13.500L11,10.500Z" fill="#a4a4a4"/></svg>
<svg class="abs" style="left:6px;top:488px;overflow:visible" width="17" height="17" viewBox="0 0 17 17"><path d="M0,1.500H17M14,4V15M11.500,16H17" fill="none" stroke="#a4a4a4" stroke-width="1.100"/><text x="0" y="8" font-size="5.500" font-weight="bold" font-family="Liberation Sans" fill="#a4a4a4">481m</text><path d="M11.500,7L14,3.500L16.500,7ZM11.500,12L14,15L16.500,12Z" fill="#a4a4a4"/></svg>
<div class="abs" style="left:33px;top:78px;width:115px;height:2px;border-top:1px solid #a6a6a6;border-right:1px solid #a6a6a6"></div>
<div class="abs" style="left:149px;top:72px;width:1px;height:862px;background:#fcfcfc"></div><div class="abs" style="left:150px;top:72px;width:2px;height:862px;background:#d0d0d0"></div>
<div class="abs" style="left:35px;top:81px;width:112px;height:21px;border:1px solid #707070;border-radius:3px;background:linear-gradient(#f4f4f4 0%,#ebebeb 48%,#dcdcdc 52%,#cfcfcf 100%);box-shadow:inset 0 0 0 1px rgba(255,255,255,.7)"><span class="abs" style="left:3.5px;top:3px;font-size:11.3px;white-space:pre;letter-spacing:-.1px">RocoLine H0 senz</span><svg class="abs" style="right:4px;top:7px" width="8" height="5" viewBox="0 0 8 5"><path d="M0,0H8L4,4.500Z" fill="#000"/></svg></div>
<div class="abs" style="left:35px;top:155px;width:90px;height:21px;border:1px solid #707070;border-radius:3px;background:linear-gradient(#f4f4f4 0%,#ebebeb 48%,#dcdcdc 52%,#cfcfcf 100%);box-shadow:inset 0 0 0 1px rgba(255,255,255,.7)"><span class="abs" style="left:3.5px;top:3px;font-size:11.3px;white-space:pre;letter-spacing:-.1px">Gallerie</span><svg class="abs" style="right:4px;top:7px" width="8" height="5" viewBox="0 0 8 5"><path d="M0,0H8L4,4.500Z" fill="#000"/></svg></div>
<svg class="abs" style="left:51px;top:109px;overflow:visible" width="16" height="16" viewBox="0 0 16 16"><path d="M1,6V8H15V10.500" fill="none" stroke="#000" stroke-width="1.300"/></svg>
<svg class="abs" style="left:72px;top:109px;overflow:visible" width="16" height="16" viewBox="0 0 16 16"><path d="M1,9V11H4C9,10 12,8 15,5.500V7" fill="none" stroke="#000" stroke-width="1.300"/></svg>
<svg class="abs" style="left:94px;top:109px;overflow:visible" width="16" height="16" viewBox="0 0 16 16"><path d="M1,8V10H15V12M5,9.500L13,6L14.500,5V7" fill="none" stroke="#000" stroke-width="1.300"/></svg>
<svg class="abs" style="left:115px;top:108px;overflow:visible" width="18" height="18" viewBox="0 0 18 18"><path d="M9,0V18M0,9H18M2.500,2.500L15.500,15.500M15.500,2.500L2.500,15.500M15,6.500H18M15,11.500H18" stroke="#000" stroke-width="1"/><circle cx="8.500" cy="9" r="6.300" fill="#8c8c8c" stroke="#000" stroke-width="1.100"/><path d="M2.500,9H15" stroke="#000" stroke-width="1"/><rect x="5" y="6.500" width="3" height="2.500" fill="#000"/></svg>
<svg class="abs" style="left:51px;top:131px;overflow:visible" width="16" height="16" viewBox="0 0 16 16"><path d="M3,1V14M3,1.500H8M3,6H7M.5,14H5.500" fill="none" stroke="#000" stroke-width="1.700"/><path d="M7,10.500L11,6.500L15,10.500V14.500H7.500Z" fill="#808080" stroke="#000" stroke-width="1.200"/></svg>
<div class="abs" style="left:69px;top:129px;width:23px;height:20px;border:1px solid #787878;border-radius:3px;background:linear-gradient(#c4c4c4,#dcdcdc);box-shadow:inset 0 1px 2px rgba(0,0,0,.25)"></div>
<svg class="abs" style="left:71px;top:130px;overflow:visible" width="19" height="17" viewBox="0 0 19 17"><ellipse cx="3.500" cy="5" rx="2.600" ry="4.800" fill="#0a8a0a"/><path d="M3,9V12" stroke="#000" stroke-width="1.600"/><path d="M5.500,15V8C5.500,5 8,4.500 11,4.500" fill="none" stroke="#000" stroke-width="1.100"/><path d="M4,15.500H8M11,15.500H16" stroke="#000" stroke-width="1.200"/><rect x="12" y="3.500" width="3" height="3" fill="none" stroke="#000" stroke-width="1"/><path d="M12.500,7V15M15,7V13M13,9.500H15.500" fill="none" stroke="#000" stroke-width="1"/></svg>
<svg class="abs" style="left:94px;top:129px;overflow:visible" width="14" height="20" viewBox="0 0 14 20"><path d="M9,1L2.500,9.500H10L6,16" fill="none" stroke="#f4f090" stroke-width="3.500"/><path d="M9.500,.5L2.500,9.500H10.500L6,16.500" fill="none" stroke="#000" stroke-width="1.600"/><path d="M3.500,14L6,19L10.500,15.500Z" fill="#000"/><path d="M2,9.500H11" stroke="#000" stroke-width="2"/></svg>
<svg class="abs" style="left:115px;top:131px;overflow:visible" width="18" height="16" viewBox="0 0 18 16"><rect x="3" y="0" width="11" height="5" fill="#8a1018"/><path d="M3,5H10V7H16.500L15,10H3Z" fill="#8a1018"/><path d="M3,8.500H15.500L15,10.500H3Z" fill="#4a7a3a"/><path d="M11.500,7H16.500L15.500,9H11.500Z" fill="#fff" stroke="#2a4a2a" stroke-width=".7"/><path d="M1,15.500V13H17.500V11.500" fill="none" stroke="#000" stroke-width="1.300"/></svg>
<svg class="abs" style="left:128px;top:159px;overflow:visible" width="18" height="14" viewBox="0 0 18 14"><path d="M1,1.500H16L10.500,7.500V12.500H7V7.500Z" fill="#b4b4b4" stroke="#000" stroke-width="1.200"/><path d="M14,5L16.500,2.500L17.500,3.500L15,6Z" fill="#fff" stroke="#333" stroke-width=".7"/></svg>
<div class="abs" style="left:35px;top:181px;width:112px;height:728px;background:#fff;border:1px solid #a0a4ac"></div>
<div class="abs" style="left:37px;top:183px;width:54px;height:71px;background:#3591ea;overflow:hidden"><svg class="abs" style="left:0;top:1.500px" width="10.500" height="11.500" viewBox="0 0 12 12" preserveAspectRatio="none"><rect x="0" y="0" width="12" height="12" fill="#c4c4c4"/><ellipse cx="3" cy="4.500" rx="2.300" ry="4" fill="#0a7a0a"/><path d="M3,8V11.500" stroke="#000" stroke-width="1.400"/><path d="M6.500,1.500H11.500V4.500H6.500Z" fill="#000"/><rect x="8" y="2.200" width="2" height="1.600" fill="#ddd"/><path d="M9,4.500V11M7,11H11" stroke="#000" stroke-width="1.400"/></svg><span class="abs" style="left:11.500px;top:.5px;font-size:11.300px;white-space:pre;color:#d8f4ff;letter-spacing:-.450px">Portale 1</span><svg class="abs" style="left:17px;top:14px;overflow:visible" width="18" height="16" viewBox="0 0 18 16"><path d="M1,2.500V.5M1,2.500H3.500L5,1H12C20.500,1 20.500,14.500 12,14.500L10,16L7.500,14.500H1.500V16.500" fill="none" stroke="#15156a" stroke-width="1.200"/></svg><div class="abs" style="left:-10px;top:30.500px;width:74px;text-align:center;font-size:9.600px;line-height:12.200px;color:#c6ecff;white-space:pre;letter-spacing:.05px">Portale di<br>galleria a 1<br>binario per<br>fermo</div></div>
<div class="abs" style="left:92px;top:183px;width:54px;height:71px;background:#fff;overflow:hidden"><svg class="abs" style="left:0;top:1.500px" width="10.500" height="11.500" viewBox="0 0 12 12" preserveAspectRatio="none"><rect x="0" y="0" width="12" height="12" fill="#c4c4c4"/><ellipse cx="3" cy="4.500" rx="2.300" ry="4" fill="#0a7a0a"/><path d="M3,8V11.500" stroke="#000" stroke-width="1.400"/><path d="M6.500,1.500H11.500V4.500H6.500Z" fill="#000"/><rect x="8" y="2.200" width="2" height="1.600" fill="#ddd"/><path d="M9,4.500V11M7,11H11" stroke="#000" stroke-width="1.400"/></svg><span class="abs" style="left:11.500px;top:.5px;font-size:11.300px;white-space:pre;color:#000;letter-spacing:-.450px">Portale 2</span><svg class="abs" style="left:17px;top:14px;overflow:visible" width="18" height="16" viewBox="0 0 18 16"><path d="M5,2V1H9C14,1 14,13 10,14.500L8,15.500L6,14.500H5V16" fill="none" stroke="#8a8a8a" stroke-width="1.200"/></svg><div class="abs" style="left:-10px;top:30.500px;width:74px;text-align:center;font-size:9.600px;line-height:12.200px;color:#62a4d6;white-space:pre;letter-spacing:.05px">Portale di<br>galleria a 2<br>binari per<br>fermo</div></div>
<div class="abs" style="left:37px;top:254px;width:109px;height:1px;background:#000"></div>
<div class="abs" style="left:37px;top:255px;width:54px;height:71px;background:#fff;overflow:hidden"><svg class="abs" style="left:0;top:1.500px" width="10.500" height="11.500" viewBox="0 0 12 12" preserveAspectRatio="none"><rect x="0" y="0" width="12" height="12" fill="#c4c4c4"/><ellipse cx="3" cy="4.500" rx="2.300" ry="4" fill="#0a7a0a"/><path d="M3,8V11.500" stroke="#000" stroke-width="1.400"/><path d="M6.500,1.500H11.500V4.500H6.500Z" fill="#000"/><rect x="8" y="2.200" width="2" height="1.600" fill="#ddd"/><path d="M9,4.500V11M7,11H11" stroke="#000" stroke-width="1.400"/></svg><span class="abs" style="left:11.500px;top:.5px;font-size:11.300px;white-space:pre;color:#000;letter-spacing:-.450px">Portale 1</span><svg class="abs" style="left:17px;top:14px;overflow:visible" width="18" height="16" viewBox="0 0 18 16"><path d="M1,2.500V.5M1,2.500H3.500L5,1H12C20.500,1 20.500,14.500 12,14.500L10,16L7.500,14.500H1.500V16.500" fill="none" stroke="#8a8a8a" stroke-width="1.200"/></svg><div class="abs" style="left:-10px;top:30.500px;width:74px;text-align:center;font-size:9.600px;line-height:12.200px;color:#62a4d6;white-space:pre;letter-spacing:.05px">Portale di<br>galleria a 1<br>binario per<br>linee</div></div>
<div class="abs" style="left:92px;top:255px;width:54px;height:71px;background:#fff;overflow:hidden"><svg class="abs" style="left:0;top:1.500px" width="10.500" height="11.500" viewBox="0 0 12 12" preserveAspectRatio="none"><rect x="0" y="0" width="12" height="12" fill="#c4c4c4"/><ellipse cx="3" cy="4.500" rx="2.300" ry="4" fill="#0a7a0a"/><path d="M3,8V11.500" stroke="#000" stroke-width="1.400"/><path d="M6.500,1.500H11.500V4.500H6.500Z" fill="#000"/><rect x="8" y="2.200" width="2" height="1.600" fill="#ddd"/><path d="M9,4.500V11M7,11H11" stroke="#000" stroke-width="1.400"/></svg><span class="abs" style="left:11.500px;top:.5px;font-size:11.300px;white-space:pre;color:#000;letter-spacing:-.450px">Portale 2</span><svg class="abs" style="left:17px;top:14px;overflow:visible" width="18" height="16" viewBox="0 0 18 16"><path d="M5,2V1H9C14,1 14,13 10,14.500L8,15.500L6,14.500H5V16" fill="none" stroke="#8a8a8a" stroke-width="1.200"/></svg><div class="abs" style="left:-10px;top:30.500px;width:74px;text-align:center;font-size:9.600px;line-height:12.200px;color:#62a4d6;white-space:pre;letter-spacing:.05px">Portale di<br>galleria a 2<br>binari per<br>linee</div></div>
<div class="abs" style="left:37px;top:326px;width:109px;height:1px;background:#000"></div>
<div class="abs" style="left:37px;top:327px;width:54px;height:71px;background:#fff;overflow:hidden"><svg class="abs" style="left:0;top:1.500px" width="10.500" height="11.500" viewBox="0 0 12 12" preserveAspectRatio="none"><rect x="0" y="0" width="12" height="12" fill="#c4c4c4"/><ellipse cx="3" cy="4.500" rx="2.300" ry="4" fill="#0a7a0a"/><path d="M3,8V11.500" stroke="#000" stroke-width="1.400"/><path d="M6.500,1.500H11.500V4.500H6.500Z" fill="#000"/><rect x="8" y="2.200" width="2" height="1.600" fill="#ddd"/><path d="M9,4.500V11M7,11H11" stroke="#000" stroke-width="1.400"/></svg><span class="abs" style="left:11.500px;top:.5px;font-size:11.300px;white-space:pre;color:#000;letter-spacing:-.450px">Portale 1</span><svg class="abs" style="left:17px;top:14px;overflow:visible" width="18" height="16" viewBox="0 0 18 16"><path d="M1,1.500H13L14.500,3V12L13,13.500H1" fill="none" stroke="#7c7c7c" stroke-width="2.400"/></svg><div class="abs" style="left:-10px;top:30.500px;width:74px;text-align:center;font-size:9.600px;line-height:12.200px;color:#62a4d6;white-space:pre;letter-spacing:.05px">Portale di<br>galleria a 1<br>binario,<br>in</div></div>
<div class="abs" style="left:92px;top:327px;width:54px;height:71px;background:#fff;overflow:hidden"><svg class="abs" style="left:0;top:1.500px" width="10.500" height="11.500" viewBox="0 0 12 12" preserveAspectRatio="none"><rect x="0" y="0" width="12" height="12" fill="#c4c4c4"/><ellipse cx="3" cy="4.500" rx="2.300" ry="4" fill="#0a7a0a"/><path d="M3,8V11.500" stroke="#000" stroke-width="1.400"/><path d="M6.500,1.500H11.500V4.500H6.500Z" fill="#000"/><rect x="8" y="2.200" width="2" height="1.600" fill="#ddd"/><path d="M9,4.500V11M7,11H11" stroke="#000" stroke-width="1.400"/></svg><span class="abs" style="left:11.500px;top:.5px;font-size:11.300px;white-space:pre;color:#000;letter-spacing:-.450px">Portale 2</span><svg class="abs" style="left:17px;top:14px;overflow:visible" width="18" height="16" viewBox="0 0 18 16"><path d="M5,1.500H12.500L14,3V12L12.500,13.500H5" fill="none" stroke="#7c7c7c" stroke-width="2.400"/></svg><div class="abs" style="left:-10px;top:30.500px;width:74px;text-align:center;font-size:9.600px;line-height:12.200px;color:#62a4d6;white-space:pre;letter-spacing:.05px">Portale di<br>galleria a 2<br>binari,<br>in</div></div>
<div class="abs" style="left:37px;top:398px;width:109px;height:1px;background:#000"></div>
<div class="abs" style="left:37px;top:399px;width:54px;height:71px;background:#fff;overflow:hidden"><svg class="abs" style="left:0;top:1.500px" width="10.500" height="11.500" viewBox="0 0 12 12" preserveAspectRatio="none"><rect x="0" y="0" width="12" height="12" fill="#c4c4c4"/><ellipse cx="3" cy="4.500" rx="2.300" ry="4" fill="#0a7a0a"/><path d="M3,8V11.500" stroke="#000" stroke-width="1.400"/><path d="M6.500,1.500H11.500V4.500H6.500Z" fill="#000"/><rect x="8" y="2.200" width="2" height="1.600" fill="#ddd"/><path d="M9,4.500V11M7,11H11" stroke="#000" stroke-width="1.400"/></svg><span class="abs" style="left:11.500px;top:.5px;font-size:11.300px;white-space:pre;color:#000;letter-spacing:-.450px">Portale ICE</span><svg class="abs" style="left:17px;top:14px;overflow:visible" width="18" height="16" viewBox="0 0 18 16"><path d="M4,1.500V3H6.500L8,2H10C15,3 15,12 10,13L8,14L6,13H4V15" fill="none" stroke="#8a8a8a" stroke-width="1.100"/></svg><div class="abs" style="left:-10px;top:30.500px;width:74px;text-align:center;font-size:9.600px;line-height:12.200px;color:#62a4d6;white-space:pre;letter-spacing:.05px">Portale di<br>galleria ICE<br><br></div></div>
<div class="abs" style="left:92px;top:399px;width:54px;height:71px;background:#fff;overflow:hidden"><svg class="abs" style="left:0;top:1.500px" width="10.500" height="11.500" viewBox="0 0 12 12" preserveAspectRatio="none"><rect x="0" y="0" width="12" height="12" fill="#d8d0c0"/><ellipse cx="3" cy="4.500" rx="2.300" ry="4" fill="#2a7a2a"/><path d="M3,8V11.500" stroke="#402010" stroke-width="1.400"/><path d="M5.500,1H12V5H5.500Z" fill="#8a2a1a"/><rect x="7.500" y="2" width="2" height="2" fill="#e8d0c0"/><path d="M9,5V11M6.500,11.500H11.500" stroke="#6a2010" stroke-width="1.600"/></svg><span class="abs" style="left:11.500px;top:.5px;font-size:11.300px;white-space:pre;color:#000;letter-spacing:-.450px">Sempione</span><svg class="abs" style="left:17px;top:14px;overflow:visible" width="18" height="16" viewBox="0 0 18 16"><rect x="6.500" y="0" width="5" height="16" fill="#808080"/></svg><div class="abs" style="left:-10px;top:30.500px;width:74px;text-align:center;font-size:9.600px;line-height:12.200px;color:#62a4d6;white-space:pre;letter-spacing:.05px">Portale di<br>galleria<br>Sempione<br>Sud</div></div>
<div class="abs" style="left:37px;top:470px;width:109px;height:1px;background:#000"></div>
<div class="abs" style="left:37px;top:471px;width:54px;height:71px;background:#fff;overflow:hidden"><svg class="abs" style="left:0;top:1.500px" width="10.500" height="11.500" viewBox="0 0 12 12" preserveAspectRatio="none"><rect x="0" y="0" width="12" height="12" fill="#d8d0c0"/><ellipse cx="3" cy="4.500" rx="2.300" ry="4" fill="#2a7a2a"/><path d="M3,8V11.500" stroke="#402010" stroke-width="1.400"/><path d="M5.500,1H12V5H5.500Z" fill="#8a2a1a"/><rect x="7.500" y="2" width="2" height="2" fill="#e8d0c0"/><path d="M9,5V11M6.500,11.500H11.500" stroke="#6a2010" stroke-width="1.600"/></svg><span class="abs" style="left:11.500px;top:.5px;font-size:11.300px;white-space:pre;color:#000;letter-spacing:-.450px">Sempione</span><svg class="abs" style="left:17px;top:14px;overflow:visible" width="18" height="16" viewBox="0 0 18 16"><path d="M3,15V9L7,8L9,2H12V5L10,10L8,15Z" fill="#808080"/></svg><div class="abs" style="left:-10px;top:30.500px;width:74px;text-align:center;font-size:9.600px;line-height:12.200px;color:#62a4d6;white-space:pre;letter-spacing:.05px">Portale di<br>galleria<br>Sempione<br>Nord</div></div>
<div class="abs" style="left:92px;top:471px;width:54px;height:71px;background:#fff;overflow:hidden"><svg class="abs" style="left:0;top:1.500px" width="10.500" height="11.500" viewBox="0 0 12 12" preserveAspectRatio="none"><rect x="0" y="0" width="12" height="12" fill="#d8d0c0"/><ellipse cx="3" cy="4.500" rx="2.300" ry="4" fill="#2a7a2a"/><path d="M3,8V11.500" stroke="#402010" stroke-width="1.400"/><path d="M5.500,1H12V5H5.500Z" fill="#8a2a1a"/><rect x="7.500" y="2" width="2" height="2" fill="#e8d0c0"/><path d="M9,5V11M6.500,11.500H11.500" stroke="#6a2010" stroke-width="1.600"/></svg><span class="abs" style="left:11.500px;top:.5px;font-size:11.300px;white-space:pre;color:#000;letter-spacing:-.450px">Portale 1</span><svg class="abs" style="left:17px;top:14px;overflow:visible" width="18" height="16" viewBox="0 0 18 16"><path d="M9,0V16" stroke="#707070" stroke-width="1.800"/></svg><div class="abs" style="left:-10px;top:30.500px;width:74px;text-align:center;font-size:9.600px;line-height:12.200px;color:#62a4d6;white-space:pre;letter-spacing:.05px">Portale di<br>galleria a 1<br>binario<br>TT N. 49971</div></div>
<div class="abs" style="left:37px;top:542px;width:109px;height:1px;background:#000"></div>
<div class="abs" style="left:37px;top:543px;width:54px;height:71px;background:#fff;overflow:hidden"><svg class="abs" style="left:0;top:1.500px" width="10.500" height="11.500" viewBox="0 0 12 12" preserveAspectRatio="none"><rect x="0" y="0" width="12" height="12" fill="#d8d0c0"/><ellipse cx="3" cy="4.500" rx="2.300" ry="4" fill="#2a7a2a"/><path d="M3,8V11.500" stroke="#402010" stroke-width="1.400"/><path d="M5.500,1H12V5H5.500Z" fill="#8a2a1a"/><rect x="7.500" y="2" width="2" height="2" fill="#e8d0c0"/><path d="M9,5V11M6.500,11.500H11.500" stroke="#6a2010" stroke-width="1.600"/></svg><span class="abs" style="left:11.500px;top:.5px;font-size:11.300px;white-space:pre;color:#000;letter-spacing:-.450px">Loreley N</span><svg class="abs" style="left:17px;top:14px;overflow:visible" width="18" height="16" viewBox="0 0 18 16"><path d="M5.500,1V15H8M5.500,13.500H13" stroke="#808080" stroke-width="2" fill="none"/><path d="M7,5H10C14,6 13,11 9,11.500" fill="none" stroke="#555" stroke-width="1"/></svg><div class="abs" style="left:-10px;top:30.500px;width:74px;text-align:center;font-size:9.600px;line-height:12.200px;color:#62a4d6;white-space:pre;letter-spacing:.05px">Portale di<br>galleria<br>Loreley<br>Nord</div></div>
<div class="abs" style="left:92px;top:543px;width:54px;height:71px;background:#fff;overflow:hidden"><svg class="abs" style="left:0;top:1.500px" width="10.500" height="11.500" viewBox="0 0 12 12" preserveAspectRatio="none"><rect x="0" y="0" width="12" height="12" fill="#d8d0c0"/><ellipse cx="3" cy="4.500" rx="2.300" ry="4" fill="#2a7a2a"/><path d="M3,8V11.500" stroke="#402010" stroke-width="1.400"/><path d="M5.500,1H12V5H5.500Z" fill="#8a2a1a"/><rect x="7.500" y="2" width="2" height="2" fill="#e8d0c0"/><path d="M9,5V11M6.500,11.500H11.500" stroke="#6a2010" stroke-width="1.600"/></svg><span class="abs" style="left:11.500px;top:.5px;font-size:11.300px;white-space:pre;color:#000;letter-spacing:-.450px">Loreley N</span><svg class="abs" style="left:17px;top:14px;overflow:visible" width="18" height="16" viewBox="0 0 18 16"><path d="M5.500,1V15H8M5.500,13.500H13" stroke="#808080" stroke-width="2" fill="none"/><path d="M7,5H10C14,6 13,11 9,11.500" fill="none" stroke="#555" stroke-width="1"/></svg><div class="abs" style="left:-10px;top:30.500px;width:74px;text-align:center;font-size:9.600px;line-height:12.200px;color:#62a4d6;white-space:pre;letter-spacing:.05px">Portale di<br>galleria<br>Loreley<br>Nord</div></div>
<div class="abs" style="left:37px;top:614px;width:109px;height:1px;background:#000"></div>
<div class="abs" style="left:37px;top:615px;width:54px;height:71px;background:#fff;overflow:hidden"><svg class="abs" style="left:0;top:1.500px" width="10.500" height="11.500" viewBox="0 0 12 12" preserveAspectRatio="none"><rect x="0" y="0" width="12" height="12" fill="#d8d0c0"/><ellipse cx="3" cy="4.500" rx="2.300" ry="4" fill="#2a7a2a"/><path d="M3,8V11.500" stroke="#402010" stroke-width="1.400"/><path d="M5.500,1H12V5H5.500Z" fill="#8a2a1a"/><rect x="7.500" y="2" width="2" height="2" fill="#e8d0c0"/><path d="M9,5V11M6.500,11.500H11.500" stroke="#6a2010" stroke-width="1.600"/></svg><span class="abs" style="left:11.500px;top:.5px;font-size:11.300px;white-space:pre;color:#000;letter-spacing:-.450px">Loreley S</span><svg class="abs" style="left:17px;top:14px;overflow:visible" width="18" height="16" viewBox="0 0 18 16"><path d="M9,2V9H4V14H2" stroke="#808080" stroke-width="1.600" fill="none"/><path d="M9,3L11,5M10,5C14,5 14,10 10,10.500" fill="none" stroke="#555" stroke-width="1"/></svg><div class="abs" style="left:-10px;top:30.500px;width:74px;text-align:center;font-size:9.600px;line-height:12.200px;color:#62a4d6;white-space:pre;letter-spacing:.05px">Portale di<br>galleria<br>Loreley Sud<br></div></div>
<div class="abs" style="left:92px;top:615px;width:54px;height:71px;background:#fff;overflow:hidden"><svg class="abs" style="left:0;top:1.500px" width="10.500" height="11.500" viewBox="0 0 12 12" preserveAspectRatio="none"><rect x="0" y="0" width="12" height="12" fill="#d8d0c0"/><ellipse cx="3" cy="4.500" rx="2.300" ry="4" fill="#2a7a2a"/><path d="M3,8V11.500" stroke="#402010" stroke-width="1.400"/><path d="M5.500,1H12V5H5.500Z" fill="#8a2a1a"/><rect x="7.500" y="2" width="2" height="2" fill="#e8d0c0"/><path d="M9,5V11M6.500,11.500H11.500" stroke="#6a2010" stroke-width="1.600"/></svg><span class="abs" style="left:11.500px;top:.5px;font-size:11.300px;white-space:pre;color:#000;letter-spacing:-.450px">Loreley S</span><svg class="abs" style="left:17px;top:14px;overflow:visible" width="18" height="16" viewBox="0 0 18 16"><path d="M9,2V9H4V14H2" stroke="#808080" stroke-width="1.600" fill="none"/><path d="M9,3L11,5M10,5C14,5 14,10 10,10.500" fill="none" stroke="#555" stroke-width="1"/></svg><div class="abs" style="left:-10px;top:30.500px;width:74px;text-align:center;font-size:9.600px;line-height:12.200px;color:#62a4d6;white-space:pre;letter-spacing:.05px">Portale di<br>galleria<br>Loreley Sud<br></div></div>
<div class="abs" style="left:37px;top:686px;width:109px;height:1px;background:#000"></div>
<div class="abs" style="left:37px;top:687px;width:54px;height:71px;background:#fff;overflow:hidden"><svg class="abs" style="left:0;top:1.500px" width="10.500" height="11.500" viewBox="0 0 12 12" preserveAspectRatio="none"><rect x="0" y="0" width="12" height="12" fill="#d8d0c0"/><ellipse cx="3" cy="4.500" rx="2.300" ry="4" fill="#2a7a2a"/><path d="M3,8V11.500" stroke="#402010" stroke-width="1.400"/><path d="M5.500,1H12V5H5.500Z" fill="#8a2a1a"/><rect x="7.500" y="2" width="2" height="2" fill="#e8d0c0"/><path d="M9,5V11M6.500,11.500H11.500" stroke="#6a2010" stroke-width="1.600"/></svg><span class="abs" style="left:11.500px;top:.5px;font-size:11.300px;white-space:pre;color:#000;letter-spacing:-.450px">PortGalC</span><svg class="abs" style="left:17px;top:14px;overflow:visible" width="18" height="16" viewBox="0 0 18 16"><path d="M9,0V16" stroke="#787878" stroke-width="1.800"/></svg><div class="abs" style="left:-10px;top:30.500px;width:74px;text-align:center;font-size:9.600px;line-height:12.200px;color:#62a4d6;white-space:pre;letter-spacing:.05px">Portale di<br>galleria a 1<br>binario -Muro<br>in calcest</div></div>
<div class="abs" style="left:92px;top:687px;width:54px;height:71px;background:#fff;overflow:hidden"><svg class="abs" style="left:0;top:1.500px" width="10.500" height="11.500" viewBox="0 0 12 12" preserveAspectRatio="none"><rect x="0" y="0" width="12" height="12" fill="#d8d0c0"/><ellipse cx="3" cy="4.500" rx="2.300" ry="4" fill="#2a7a2a"/><path d="M3,8V11.500" stroke="#402010" stroke-width="1.400"/><path d="M5.500,1H12V5H5.500Z" fill="#8a2a1a"/><rect x="7.500" y="2" width="2" height="2" fill="#e8d0c0"/><path d="M9,5V11M6.500,11.500H11.500" stroke="#6a2010" stroke-width="1.600"/></svg><span class="abs" style="left:11.500px;top:.5px;font-size:11.300px;white-space:pre;color:#000;letter-spacing:-.450px">PortGalC</span><svg class="abs" style="left:17px;top:14px;overflow:visible" width="18" height="16" viewBox="0 0 18 16"><path d="M9,0V16" stroke="#787878" stroke-width="1.800"/></svg><div class="abs" style="left:-10px;top:30.500px;width:74px;text-align:center;font-size:9.600px;line-height:12.200px;color:#62a4d6;white-space:pre;letter-spacing:.05px">Portale di<br>galleria a 2<br>binari -Muro<br>in calcest</div></div>
<div class="abs" style="left:37px;top:758px;width:109px;height:1px;background:#000"></div>
<div class="abs" style="left:37px;top:759px;width:54px;height:71px;background:#fff;overflow:hidden"><svg class="abs" style="left:0;top:1.500px" width="10.500" height="11.500" viewBox="0 0 12 12" preserveAspectRatio="none"><rect x="0" y="0" width="12" height="12" fill="#d8d0c0"/><ellipse cx="3" cy="4.500" rx="2.300" ry="4" fill="#2a7a2a"/><path d="M3,8V11.500" stroke="#402010" stroke-width="1.400"/><path d="M5.500,1H12V5H5.500Z" fill="#8a2a1a"/><rect x="7.500" y="2" width="2" height="2" fill="#e8d0c0"/><path d="M9,5V11M6.500,11.500H11.500" stroke="#6a2010" stroke-width="1.600"/></svg><span class="abs" style="left:11.500px;top:.5px;font-size:11.300px;white-space:pre;color:#000;letter-spacing:-.450px">PortGalP</span><svg class="abs" style="left:17px;top:14px;overflow:visible" width="18" height="16" viewBox="0 0 18 16"><path d="M9.500,0V16.500" stroke="#808080" stroke-width="3.400"/><path d="M7,.5H9M7,16H9" stroke="#808080" stroke-width="1"/></svg><div class="abs" style="left:-10px;top:30.500px;width:74px;text-align:center;font-size:9.600px;line-height:12.200px;color:#62a4d6;white-space:pre;letter-spacing:.05px">Portale di<br>galleria a 1<br>binario -Muro<br>in pietra</div></div>
<div class="abs" style="left:92px;top:759px;width:54px;height:71px;background:#fff;overflow:hidden"><svg class="abs" style="left:0;top:1.500px" width="10.500" height="11.500" viewBox="0 0 12 12" preserveAspectRatio="none"><rect x="0" y="0" width="12" height="12" fill="#d8d0c0"/><ellipse cx="3" cy="4.500" rx="2.300" ry="4" fill="#2a7a2a"/><path d="M3,8V11.500" stroke="#402010" stroke-width="1.400"/><path d="M5.500,1H12V5H5.500Z" fill="#8a2a1a"/><rect x="7.500" y="2" width="2" height="2" fill="#e8d0c0"/><path d="M9,5V11M6.500,11.500H11.500" stroke="#6a2010" stroke-width="1.600"/></svg><span class="abs" style="left:11.500px;top:.5px;font-size:11.300px;white-space:pre;color:#000;letter-spacing:-.450px">PortGalP</span><svg class="abs" style="left:17px;top:14px;overflow:visible" width="18" height="16" viewBox="0 0 18 16"><path d="M9.500,0V16.500" stroke="#808080" stroke-width="3.400"/><path d="M7,.5H9M7,16H9" stroke="#808080" stroke-width="1"/></svg><div class="abs" style="left:-10px;top:30.500px;width:74px;text-align:center;font-size:9.600px;line-height:12.200px;color:#62a4d6;white-space:pre;letter-spacing:.05px">Portale di<br>galleria a 2<br>binari -Muro in<br>pietra</div></div>
<div class="abs" style="left:37px;top:830px;width:109px;height:1px;background:#000"></div>
<div class="abs" style="left:37px;top:831px;width:54px;height:71px;background:#fff;overflow:hidden"><svg class="abs" style="left:0;top:1.500px" width="10.500" height="11.500" viewBox="0 0 12 12" preserveAspectRatio="none"><rect x="0" y="0" width="12" height="12" fill="#d8d0c0"/><ellipse cx="3" cy="4.500" rx="2.300" ry="4" fill="#2a7a2a"/><path d="M3,8V11.500" stroke="#402010" stroke-width="1.400"/><path d="M5.500,1H12V5H5.500Z" fill="#8a2a1a"/><rect x="7.500" y="2" width="2" height="2" fill="#e8d0c0"/><path d="M9,5V11M6.500,11.500H11.500" stroke="#6a2010" stroke-width="1.600"/></svg><span class="abs" style="left:11.500px;top:.5px;font-size:11.300px;white-space:pre;color:#000;letter-spacing:-.450px">PortGalA</span><svg class="abs" style="left:17px;top:14px;overflow:visible" width="18" height="16" viewBox="0 0 18 16"><path d="M9.500,0V16.500" stroke="#808080" stroke-width="3.400"/><path d="M7,.5H9M7,16H9" stroke="#808080" stroke-width="1"/></svg><div class="abs" style="left:-10px;top:30.500px;width:74px;text-align:center;font-size:9.600px;line-height:12.200px;color:#62a4d6;white-space:pre;letter-spacing:.05px">Portale di<br>galleria a 1<br>binario -Muro<br>in arenaria</div></div>
<div class="abs" style="left:92px;top:831px;width:54px;height:71px;background:#fff;overflow:hidden"><svg class="abs" style="left:0;top:1.500px" width="10.500" height="11.500" viewBox="0 0 12 12" preserveAspectRatio="none"><rect x="0" y="0" width="12" height="12" fill="#d8d0c0"/><ellipse cx="3" cy="4.500" rx="2.300" ry="4" fill="#2a7a2a"/><path d="M3,8V11.500" stroke="#402010" stroke-width="1.400"/><path d="M5.500,1H12V5H5.500Z" fill="#8a2a1a"/><rect x="7.500" y="2" width="2" height="2" fill="#e8d0c0"/><path d="M9,5V11M6.500,11.500H11.500" stroke="#6a2010" stroke-width="1.600"/></svg><span class="abs" style="left:11.500px;top:.5px;font-size:11.300px;white-space:pre;color:#000;letter-spacing:-.450px">PortGalA</span><svg class="abs" style="left:17px;top:14px;overflow:visible" width="18" height="16" viewBox="0 0 18 16"><path d="M9.500,0V16.500" stroke="#808080" stroke-width="3.400"/><path d="M7,.5H9M7,16H9" stroke="#808080" stroke-width="1"/></svg><div class="abs" style="left:-10px;top:30.500px;width:74px;text-align:center;font-size:9.600px;line-height:12.200px;color:#62a4d6;white-space:pre;letter-spacing:.05px">Portale di<br>galleria a 2<br>binari -Muro in<br>arenaria</div></div>
<div class="abs" style="left:37px;top:902px;width:109px;height:1px;background:#000"></div>
<div class="abs" style="left:89.800px;top:183px;width:1.400px;height:720px;background:#000"></div>
<div class="abs" style="left:36px;top:912px;width:66px;height:19px;background:#fff;border:1px solid #e2e3ea;border-top-color:#c8c8d0"></div>
<span class="abs" style="left:105.500px;top:914.500px;font-size:12px;font-weight:bold;color:#1515a0;letter-spacing:.2px;-webkit-text-stroke:.5px #1515a0">3D</span>
<svg class="abs" style="left:128px;top:912px;overflow:visible" width="18" height="20" viewBox="0 0 18 20"><path d="M2,1V19M8,1V19" stroke="#000" stroke-width="1.500"/><path d="M5,5V15M3.500,7L5,5L6.500,7M3.500,13L5,15L6.500,13" stroke="#15158a" stroke-width="1" fill="none"/><path d="M0,3.500H10M0,16.500H10" stroke="#000" stroke-width="1"/><path d="M10,3.500H17M10,16.500H17" stroke="#000" stroke-width="1" stroke-dasharray="1 1.500"/></svg>
<div class="abs" style="left:172px;top:917px;width:1090px;height:17px;background:#eeeeee"></div>
<div class="abs" style="left:1262px;top:93px;width:18px;height:824px;background:linear-gradient(90deg,#e4e4e4,#f0f0f0 30%,#f0f0f0)"></div>
<div class="abs" style="left:1262px;top:917px;width:18px;height:17px;background:#eaeaea"></div>
<div class="abs" style="left:152px;top:917px;width:20px;height:17px;background:#dcdcdc"></div>
<div class="abs" style="left:667px;top:917px;width:100px;height:15px;border:1px solid #979797;border-radius:2px;background:linear-gradient(#f3f3f3 0%,#e6e6e6 48%,#d2d2d2 52%,#c8c8c8 100%);box-shadow:inset 0 0 0 1px rgba(255,255,255,.7)"></div>
<div class="abs" style="left:712px;top:921px;width:9px;height:7px;background:repeating-linear-gradient(90deg,#555 0,#555 1px,rgba(255,255,255,.7) 1px,rgba(255,255,255,.7) 2px,transparent 2px,transparent 3px)"></div>
<div class="abs" style="left:1263px;top:477px;width:15px;height:56px;border:1px solid #979797;border-radius:2px;background:linear-gradient(90deg,#f3f3f3 0%,#e6e6e6 48%,#d2d2d2 52%,#c8c8c8 100%);box-shadow:inset 0 0 0 1px rgba(255,255,255,.7)"></div>
<div class="abs" style="left:1267px;top:501px;width:7px;height:8px;background:repeating-linear-gradient(#555 0,#555 1px,rgba(255,255,255,.7) 1px,rgba(255,255,255,.7) 2px,transparent 2px,transparent 3px)"></div>
<svg class="abs" style="left:177px;top:920px;overflow:visible" width="6" height="9" viewBox="0 0 6 9"><path d="M5,1L1,4.500L5,8Z" fill="#404040"/></svg>
<svg class="abs" style="left:1249px;top:920px;overflow:visible" width="6" height="9" viewBox="0 0 6 9"><path d="M1,1L5,4.500L1,8Z" fill="#404040"/></svg>
<svg class="abs" style="left:1266px;top:99px;overflow:visible" width="9" height="6" viewBox="0 0 9 6"><path d="M1,5L4.500,1L8,5Z" fill="#404040"/></svg>
<svg class="abs" style="left:1266px;top:905px;overflow:visible" width="9" height="6" viewBox="0 0 9 6"><path d="M1,1L4.500,5L8,1Z" fill="#404040"/></svg>
<div class="abs" style="left:0;top:934px;width:1280px;height:30px;background:#f0f0f0;border-top:1px solid #fbfbfb"></div>
<div class="abs" style="left:3px;top:938px;width:2px;height:23px;border-left:1px solid #fff;border-right:1px solid #a0a0a0"></div>
<div class="abs" style="left:13px;top:939px;width:23px;height:20px;border:1px solid #6f6f6f;border-radius:3px;background:linear-gradient(#d0d0d0,#e4e4e4);box-shadow:inset 0 1px 1px rgba(0,0,0,.2)"></div>
<svg class="abs" style="left:16px;top:942px;overflow:visible" width="17" height="15" viewBox="0 0 17 15"><path d="M1,9.500L5,13.500M5,9.500L1,13.500" stroke="#222" stroke-width="1"/><path d="M4,14H15.500V1.500" fill="none" stroke="#222" stroke-width="1"/><text x="7" y="12" font-size="12" font-family="Liberation Sans" fill="#1515a0">1</text></svg>
<div class="abs" style="left:40px;top:941px;width:15px;height:15px;background:#d8d8d8"></div>
<span class="abs" style="left:45.5px;top:942.500px;font-size:11.500px;color:#1515a8">2</span>
<div class="abs" style="left:41px;top:947px;width:7px;height:1px;background:#1515a8"></div>
<div class="abs" style="left:63px;top:941px;width:15px;height:15px;background:#d8d8d8"></div>
<span class="abs" style="left:68.5px;top:942.500px;font-size:11.500px;color:#1515a8">3</span>
<div class="abs" style="left:64px;top:947px;width:7px;height:1px;background:#1515a8"></div>
<div class="abs" style="left:86px;top:941px;width:15px;height:15px;background:#d8d8d8"></div>
<span class="abs" style="left:91.5px;top:942.500px;font-size:11.500px;color:#1515a8">4</span>
<div class="abs" style="left:87px;top:947px;width:7px;height:1px;background:#1515a8"></div>
<div class="abs" style="left:109px;top:941px;width:15px;height:15px;background:#d8d8d8"></div>
<span class="abs" style="left:114.5px;top:942.500px;font-size:11.500px;color:#1515a8">5</span>
<div class="abs" style="left:110px;top:947px;width:7px;height:1px;background:#1515a8"></div>
<div class="abs" style="left:132px;top:941px;width:15px;height:15px;background:#d8d8d8"></div>
<span class="abs" style="left:137.5px;top:942.500px;font-size:11.500px;color:#1515a8">6</span>
<div class="abs" style="left:133px;top:947px;width:7px;height:1px;background:#1515a8"></div>
<div class="abs" style="left:155px;top:941px;width:15px;height:15px;background:#d8d8d8"></div>
<span class="abs" style="left:160.5px;top:942.500px;font-size:11.500px;color:#1515a8">7</span>
<div class="abs" style="left:156px;top:947px;width:7px;height:1px;background:#1515a8"></div>
<div class="abs" style="left:178px;top:941px;width:15px;height:15px;background:#d8d8d8"></div>
<span class="abs" style="left:183.5px;top:942.500px;font-size:11.500px;color:#1515a8">8</span>
<div class="abs" style="left:179px;top:947px;width:7px;height:1px;background:#1515a8"></div>
<div class="abs" style="left:197px;top:939px;width:23px;height:20px;border:1px solid #6f6f6f;border-radius:3px;background:linear-gradient(#d8d8c8,#e8e8e0);box-shadow:inset 0 1px 1px rgba(0,0,0,.2)"></div>
<div class="abs" style="left:201px;top:941px;width:15px;height:15px;background:#828214"></div><div class="abs" style="left:201px;top:941px;width:4px;height:4px;background:#000"></div>
<span class="abs" style="left:205.500px;top:942.500px;font-size:11.500px;color:#1a1a50">9</span>
<div class="abs" style="left:224px;top:941px;width:15px;height:15px;background:#d8d8d8"></div>
<span class="abs" style="left:226.0px;top:942.500px;font-size:11.500px;color:#1515a8;letter-spacing:-.8px">10</span>
<div class="abs" style="left:225px;top:947px;width:6px;height:1px;background:#1515a8"></div>
<div class="abs" style="left:247px;top:941px;width:15px;height:15px;background:#d8d8d8"></div>
<div class="abs" style="left:248px;top:941px;width:5px;height:5px;background:#30d890"></div>
<span class="abs" style="left:249.0px;top:942.500px;font-size:11.500px;color:#1515a8;letter-spacing:-.8px">11</span>
<div class="abs" style="left:248px;top:947px;width:6px;height:1px;background:#1515a8"></div>
<div class="abs" style="left:270px;top:941px;width:15px;height:15px;background:#d8d8d8"></div>
<span class="abs" style="left:272.0px;top:942.500px;font-size:11.500px;color:#1515a8;letter-spacing:-.8px">12</span>
<div class="abs" style="left:271px;top:947px;width:6px;height:1px;background:#1515a8"></div>
<div class="abs" style="left:293px;top:941px;width:15px;height:15px;background:#d8d8d8"></div>
<span class="abs" style="left:295.0px;top:942.500px;font-size:11.500px;color:#1515a8;letter-spacing:-.8px">13</span>
<div class="abs" style="left:294px;top:947px;width:6px;height:1px;background:#1515a8"></div>
<div class="abs" style="left:316px;top:941px;width:15px;height:15px;background:#d8d8d8"></div>
<span class="abs" style="left:318.0px;top:942.500px;font-size:11.500px;color:#1515a8;letter-spacing:-.8px">14</span>
<div class="abs" style="left:317px;top:947px;width:6px;height:1px;background:#1515a8"></div>
<div class="abs" style="left:339px;top:941px;width:15px;height:15px;background:#d8d8d8"></div>
<span class="abs" style="left:341.0px;top:942.500px;font-size:11.500px;color:#1515a8;letter-spacing:-.8px">15</span>
<div class="abs" style="left:340px;top:947px;width:6px;height:1px;background:#1515a8"></div>
<div class="abs" style="left:362px;top:941px;width:15px;height:15px;background:#d8d8d8"></div>
<span class="abs" style="left:364.0px;top:942.500px;font-size:11.500px;color:#1515a8;letter-spacing:-.8px">16</span>
<div class="abs" style="left:363px;top:947px;width:6px;height:1px;background:#1515a8"></div>
<div class="abs" style="left:385px;top:941px;width:15px;height:15px;background:#d8d8d8"></div>
<span class="abs" style="left:387.0px;top:942.500px;font-size:11.500px;color:#1515a8;letter-spacing:-.8px">17</span>
<div class="abs" style="left:386px;top:947px;width:6px;height:1px;background:#1515a8"></div>
<div class="abs" style="left:408px;top:941px;width:15px;height:15px;background:#d8d8d8"></div>
<span class="abs" style="left:410.0px;top:942.500px;font-size:11.500px;color:#1515a8;letter-spacing:-.8px">18</span>
<div class="abs" style="left:409px;top:947px;width:6px;height:1px;background:#1515a8"></div>
<div class="abs" style="left:431px;top:941px;width:15px;height:15px;background:#d8d8d8"></div>
<span class="abs" style="left:433.0px;top:942.500px;font-size:11.500px;color:#1515a8;letter-spacing:-.8px">19</span>
<div class="abs" style="left:432px;top:947px;width:6px;height:1px;background:#1515a8"></div>
<div class="abs" style="left:454px;top:941px;width:15px;height:15px;background:#d8d8d8"></div>
<span class="abs" style="left:456.0px;top:942.500px;font-size:11.500px;color:#1515a8;letter-spacing:-.8px">20</span>
<div class="abs" style="left:455px;top:947px;width:6px;height:1px;background:#1515a8"></div>
<div class="abs" style="left:477px;top:941px;width:15px;height:15px;background:#d8d8d8"></div>
<span class="abs" style="left:479.0px;top:942.500px;font-size:11.500px;color:#1515a8;letter-spacing:-.8px">21</span>
<div class="abs" style="left:478px;top:947px;width:6px;height:1px;background:#1515a8"></div>
<div class="abs" style="left:500px;top:941px;width:15px;height:15px;background:#d8d8d8"></div>
<span class="abs" style="left:502.0px;top:942.500px;font-size:11.500px;color:#1515a8;letter-spacing:-.8px">22</span>
<div class="abs" style="left:501px;top:947px;width:6px;height:1px;background:#1515a8"></div>
<div class="abs" style="left:523px;top:941px;width:15px;height:15px;background:#d8d8d8"></div>
<span class="abs" style="left:525.0px;top:942.500px;font-size:11.500px;color:#1515a8;letter-spacing:-.8px">23</span>
<div class="abs" style="left:524px;top:947px;width:6px;height:1px;background:#1515a8"></div>
<div class="abs" style="left:546px;top:941px;width:15px;height:15px;background:#d8d8d8"></div>
<span class="abs" style="left:548.0px;top:942.500px;font-size:11.500px;color:#1515a8;letter-spacing:-.8px">24</span>
<div class="abs" style="left:547px;top:947px;width:6px;height:1px;background:#1515a8"></div>
<div class="abs" style="left:569px;top:941px;width:15px;height:15px;background:#d8d8d8"></div>
<span class="abs" style="left:571.0px;top:942.500px;font-size:11.500px;color:#1515a8;letter-spacing:-.8px">25</span>
<div class="abs" style="left:570px;top:947px;width:6px;height:1px;background:#1515a8"></div>
<div class="abs" style="left:592px;top:941px;width:15px;height:15px;background:#d8d8d8"></div>
<span class="abs" style="left:594.0px;top:942.500px;font-size:11.500px;color:#1515a8;letter-spacing:-.8px">26</span>
<div class="abs" style="left:593px;top:947px;width:6px;height:1px;background:#1515a8"></div>
<div class="abs" style="left:615px;top:941px;width:15px;height:15px;background:#d8d8d8"></div>
<span class="abs" style="left:617.0px;top:942.500px;font-size:11.500px;color:#1515a8;letter-spacing:-.8px">27</span>
<div class="abs" style="left:616px;top:947px;width:6px;height:1px;background:#1515a8"></div>
<div class="abs" style="left:638px;top:941px;width:15px;height:15px;background:#d8d8d8"></div>
<span class="abs" style="left:640.0px;top:942.500px;font-size:11.500px;color:#1515a8;letter-spacing:-.8px">28</span>
<div class="abs" style="left:639px;top:947px;width:6px;height:1px;background:#1515a8"></div>
<div class="abs" style="left:661px;top:941px;width:15px;height:15px;background:#d8d8d8"></div>
<span class="abs" style="left:663.0px;top:942.500px;font-size:11.500px;color:#1515a8;letter-spacing:-.8px">29</span>
<div class="abs" style="left:662px;top:947px;width:6px;height:1px;background:#1515a8"></div>
<div class="abs" style="left:684px;top:941px;width:15px;height:15px;background:#d8d8d8"></div>
<span class="abs" style="left:686.0px;top:942.500px;font-size:11.500px;color:#1515a8;letter-spacing:-.8px">30</span>
<div class="abs" style="left:685px;top:947px;width:6px;height:1px;background:#1515a8"></div>
<div class="abs" style="left:705px;top:940px;width:1px;height:18px;background:#909090;box-shadow:1px 0 0 #e0e0e0"></div>
<svg class="abs" style="left:714px;top:941px;overflow:visible" width="16" height="15" viewBox="0 0 16 15"><path d="M0,11L3,9H16L13,11ZM0,14L3,12H16L13,14Z" fill="#1515a0" stroke="#000" stroke-width=".6"/><path d="M0,8.500L3,6.500H16L13,8.500Z" fill="#e8e040" stroke="#000" stroke-width=".6"/><path d="M0,6L3,4H16L13,6Z" fill="#c02020" stroke="#000" stroke-width=".6"/><path d="M0,3.500L3,1.500H16L13,3.500Z" fill="#2a8a2a" stroke="#000" stroke-width=".6"/></svg>
<svg class="abs" style="left:737px;top:941px;overflow:visible" width="16" height="15" viewBox="0 0 16 15"><path d="M1,3.500L4,1H15L12,3.500Z" fill="#e8e8e8" stroke="#9a9a9a" stroke-width=".8"/><path d="M1,14L4,11.500H15L12,14Z" fill="#f4f4f4" stroke="#9a9a9a" stroke-width=".8"/><path d="M0,9L4,5.500H16L12,9Z" fill="#d02020" stroke="#801010" stroke-width=".6"/></svg>
<svg class="abs" style="left:760px;top:941px;overflow:visible" width="16" height="15" viewBox="0 0 16 15"><path d="M3,4L6,1H16L13,4Z" fill="#9a9a9a"/><path d="M0,14L3.500,10.500H14L10.500,14Z" fill="#f0f0f0" stroke="#9a9a9a" stroke-width=".8"/><path d="M8,5V10M6,8H10" stroke="#9a9a9a" stroke-width="1"/></svg>
<div class="abs" style="left:782px;top:940px;width:1px;height:18px;background:#909090;box-shadow:1px 0 0 #e0e0e0"></div>
<svg class="abs" style="left:790px;top:940px;overflow:visible" width="17" height="17" viewBox="0 0 17 17"><path d="M0,12L3,10H14L11,12Z" fill="#f8f8d0" stroke="#000" stroke-width=".8"/><path d="M0,9L3,7H15L12,9Z" fill="#e8e060" stroke="#000" stroke-width=".8"/><path d="M1,6L4,3.500H16L13,6Z" fill="#30d8c8" stroke="#000" stroke-width=".8"/><text x="10" y="16.500" font-size="10" font-weight="bold" font-family="Liberation Sans" fill="#1515c0">?</text></svg>
<div class="abs" style="left:813px;top:940px;width:1px;height:18px;background:#909090;box-shadow:1px 0 0 #e0e0e0"></div>
<div class="abs" style="left:822px;top:941px;width:16px;height:15px;border:1px solid #9a9a9a;border-radius:2px;background:#f4f4f4"></div><div class="abs" style="left:824px;top:943px;width:12px;height:11px;border:1px solid #9a9a9a"></div><span class="abs" style="left:827px;top:943.500px;font-size:10px;color:#9a9a9a">1</span>
<div class="abs" style="left:845px;top:941px;width:16px;height:15px;border:1px solid #9a9a9a;border-radius:2px;background:#f4f4f4"></div><div class="abs" style="left:847px;top:943px;width:12px;height:11px;border:1px solid #9a9a9a"></div><span class="abs" style="left:850px;top:943.500px;font-size:10px;color:#9a9a9a">2</span>
<div class="abs" style="left:868px;top:941px;width:16px;height:15px;border:1px solid #9a9a9a;border-radius:2px;background:#f4f4f4"></div><div class="abs" style="left:870px;top:943px;width:12px;height:11px;border:1px solid #9a9a9a"></div><span class="abs" style="left:873px;top:943.500px;font-size:10px;color:#9a9a9a">3</span>
<div class="abs" style="left:891px;top:941px;width:16px;height:15px;border:1px solid #9a9a9a;border-radius:2px;background:#f4f4f4"></div><div class="abs" style="left:893px;top:943px;width:12px;height:11px;border:1px solid #9a9a9a"></div><span class="abs" style="left:896px;top:943.500px;font-size:10px;color:#9a9a9a">4</span>
<div class="abs" style="left:914px;top:941px;width:16px;height:15px;border:1px solid #9a9a9a;border-radius:2px;background:#f4f4f4"></div><div class="abs" style="left:916px;top:943px;width:12px;height:11px;border:1px solid #9a9a9a"></div><span class="abs" style="left:919px;top:943.500px;font-size:10px;color:#9a9a9a">5</span>
<div class="abs" style="left:940px;top:935px;width:1px;height:28px;background:#a8a8a8"></div><div class="abs" style="left:941px;top:935px;width:1px;height:28px;background:#fff"></div>
<div class="abs" style="left:0;top:963px;width:1280px;height:21px;background:#f0f0f0;border-top:1px solid #a0a0a0"><div class="abs" style="left:0;top:0;width:1280px;height:1px;background:#fff"></div></div>
<span class="abs" style="left:2px;top:968.800px;font-size:12px;letter-spacing:-.21px;white-space:pre">Premi il tasto F1 per la Guida</span>
<span class="abs" style="left:840px;top:968.800px;font-size:12px;letter-spacing:-.1px;white-space:pre">Portale 1/Livello 10</span>
<div class="abs" style="left:1117px;top:967px;width:1px;height:16px;background:#d4d4d4"></div>
<div class="abs" style="left:1187px;top:967px;width:1px;height:16px;background:#d4d4d4"></div>
<div class="abs" style="left:1233px;top:967px;width:1px;height:16px;background:#d4d4d4"></div>
<span class="abs" style="left:1123px;top:968.800px;font-size:12px;white-space:pre;word-spacing:-1px">&lt;- 346 -&gt;</span>
<span class="abs" style="left:1193px;top:968.800px;font-size:12px;white-space:pre;letter-spacing:-.5px">+00806</span>
<span class="abs" style="left:1238.500px;top:968.800px;font-size:12px;white-space:pre;letter-spacing:-.5px">-01741</span>
<div class="abs" style="left:51px;top:958px;width:118px;height:18.500px;border:1px solid #767676;border-radius:3px;background:linear-gradient(#ffffff,#e4e5f0);box-shadow:2px 2px 3px rgba(0,0,0,.35);z-index:5"><span class="abs" style="left:5px;top:2px;font-size:11.300px;color:#575757;white-space:pre">Fare clic per iniziare.</span></div>
<div class="abs" style="left:0;top:984px;width:1280px;height:40px;background:linear-gradient(#3a3f47 0,#1b1e24 2px,#0d0f14 6px,#0b0d12 100%);overflow:hidden">
<div class="abs" style="left:0;top:0;width:1280px;height:40px;background:radial-gradient(ellipse 120px 30px at 700px 30px,rgba(40,50,70,.35),transparent),radial-gradient(ellipse 100px 30px at 1000px 10px,rgba(30,40,60,.3),transparent)"></div>
<div class="abs" style="left:3px;top:-4px;width:49px;height:49px;border-radius:50%;background:radial-gradient(circle at 28% 26%,rgba(255,90,40,.9),rgba(255,90,40,0) 42%),radial-gradient(circle at 76% 28%,rgba(60,210,60,.9),rgba(60,210,60,0) 42%),radial-gradient(circle at 26% 76%,rgba(40,170,255,.9),rgba(40,170,255,0) 44%),radial-gradient(circle at 76% 78%,rgba(255,225,60,.9),rgba(255,225,60,0) 42%);-webkit-mask-image:radial-gradient(circle,#000 55%,transparent 72%);mask-image:radial-gradient(circle,#000 55%,transparent 72%)"></div>
<div class="abs" style="left:10px;top:3px;width:35px;height:35px;border-radius:50%;background:radial-gradient(circle at 50% 30%,#d8f2fa 0%,#7fd0ea 35%,#3aa0d0 65%,#2a88c0 100%);box-shadow:0 0 0 1px rgba(200,240,255,.55)"></div>
<svg class="abs" style="left:16px;top:9px;overflow:visible" width="23" height="22" viewBox="0 0 23 22"><path d="M1,4C4,2 7,2 10,4L9,10C6,8.500 3,8.500 0,10Z" fill="#f0562a"/><path d="M12,4.500C15,6.500 18,6 22,3.500L21,9.500C18,11.500 14,12 11,10.500Z" fill="#7cc022"/><path d="M0,12C3,10 6,10 9,11.500L8,18C5,16.500 2,16.500 -1,18.500Z" fill="#2a9ae8"/><path d="M10.500,12.500C14,14 17,13.500 20.500,11.500L19.500,17.500C16,19.500 13,20 9.500,18.500Z" fill="#fbc418"/></svg>
<svg class="abs" style="left:73px;top:3px;overflow:visible" width="34" height="34" viewBox="0 0 34 34"><path d="M25.500,23 A9.500,9.500 0 1 1 27,17.500 H10" stroke="#1a78c8" stroke-width="7" fill="none"/><path d="M25.500,23 A9.500,9.500 0 1 1 27,17.500 H10" stroke="#3cb8f2" stroke-width="5.200" fill="none"/><path d="M3,30C-2,22 12,4 29,2.500C33,2.500 32,7 29,10C30,6 27,5 23,6.500C12,10 3,24 5.500,28.500C6.500,30.500 9,29.500 11,28C8,31.500 4.500,32 3,30Z" fill="#f2c21a"/></svg>
<svg class="abs" style="left:137px;top:7px;overflow:visible" width="28" height="28" viewBox="0 0 28 28"><path d="M3,3L24,1V27L3,25Z" fill="#7fb2e0"/><path d="M1,4L20,2V26L1,24Z" fill="#a8cdf0" stroke="#5a8fc8" stroke-width=".8"/><path d="M20,2L24,1V27L20,26Z" fill="#5a94cc"/><circle cx="11" cy="14" r="8.300" fill="#f07a1a"/><circle cx="11" cy="14" r="8.300" fill="none" stroke="#ffb060" stroke-width="1"/><path d="M8,9L16,14L8,19Z" fill="#fff"/></svg>
<svg class="abs" style="left:197px;top:5px;overflow:visible" width="33" height="31" viewBox="0 0 33 31"><path d="M1,6Q1,4 3,4H12L14,6H30Q32,6 32,8V27H1Z" fill="#e8c868"/><path d="M1,9H32V27H1Z" fill="#f6e29a"/><rect x="4" y="2.500" width="6" height="3" rx="1" fill="#38b048"/><rect x="12" y="4" width="5" height="3" rx="1" fill="#d83030"/><rect x="20" y="5" width="5" height="3" rx="1" fill="#3a8ad8"/><path d="M1,12Q16,9 32,12V27H1Z" fill="#f3dc8c"/><path d="M6,18Q6,16 8,16H25Q27,16 27,18V29H22V22H11V29H6Z" fill="#6fb4e8" stroke="#3a80c0" stroke-width=".8"/><path d="M6,27H27V30H6Z" fill="#8ac4f0"/></svg>
<svg class="abs" style="left:260px;top:4px;overflow:visible" width="31" height="31" viewBox="0 0 31 31"><circle cx="15.500" cy="15.500" r="15" fill="#e8e8e8"/><path d="M15.500,15.500L2.500,8A15,15 0 0 1 28.500,8Z" fill="#e34133"/><path d="M15.500,15.500L28.500,8A15,15 0 0 1 15.500,30.500Z" fill="#f9c21c"/><path d="M15.500,15.500L15.500,30.500A15,15 0 0 1 2.500,8Z" fill="#2da94f"/><path d="M15.500,8.500H28.700A15,15 0 0 0 2.500,8L8.500,18.500Z" fill="#e34133"/><path d="M21.600,19L15,30.500A15,15 0 0 0 28.700,8.500H15.500Z" fill="#f9c21c"/><path d="M9.400,19L2.500,8A15,15 0 0 0 15,30.500L21.600,19Z" fill="#2da94f"/><circle cx="15.500" cy="15.500" r="7" fill="#fff"/><circle cx="15.500" cy="15.500" r="5.600" fill="#4a8af4"/></svg>
<div class="abs" style="left:308px;top:1px;width:59px;height:38px;border:1px solid #c8c8c8;border-radius:3px;background:linear-gradient(135deg,#8a8a8a 0%,#a8a8a8 30%,#7a7a7a 52%,#9a9a9a 54%,#b4b4b4 100%);box-shadow:inset 0 0 0 1px rgba(255,255,255,.25)"></div>
<svg class="abs" style="left:321px;top:5px;overflow:visible" width="34" height="32" viewBox="0 0 34 32"><path d="M2,13L6,10L20,6L30,1L32,3L27,8L22,11L8,16L3,17Z" fill="#15159a" stroke="#000" stroke-width=".6"/><path d="M2,13L6,10L9,12.500L4,17Z" fill="#e8e040" stroke="#000" stroke-width=".6"/><rect x="22" y="11" width="11" height="11" fill="#fff"/><text x="22.500" y="20.500" font-size="10.500" font-weight="bold" font-family="Liberation Serif" fill="#15157a">13</text><path d="M4,19H22M4,23H32M4,27H32M4,31H32" stroke="#111" stroke-width="1"/><path d="M8,21L20,19L10,25L24,23L12,29L26,27L14,32" fill="none" stroke="#d01020" stroke-width="1.500"/></svg>
<div class="abs" style="left:370px;top:1px;width:59px;height:38px;border:1px solid #6a6a6a;border-radius:3px;background:linear-gradient(135deg,#555 0%,#3c3c3c 40%,#262626 52%,#2c2c2c 100%);box-shadow:inset 0 0 0 1px rgba(255,255,255,.12)"></div>
<svg class="abs" style="left:382px;top:5px;overflow:visible" width="34" height="32" viewBox="0 0 34 32"><path d="M3,19C1,10 12,4 22,6C30,8 31,17 26,24C22,29 14,31 10,28C8,26 11,23 8,22C6,21.500 4,22 3,19Z" fill="#dcecf8" stroke="#8ab0d0" stroke-width=".8"/><circle cx="9" cy="15" r="2.300" fill="#d84030"/><circle cx="14" cy="10.500" r="2.300" fill="#58b838"/><circle cx="20.500" cy="9.500" r="2.300" fill="#f0c030"/><circle cx="17" cy="18.500" r="2.100" fill="#204060"/><path d="M29,1L32,3L21,27L18,30L18.500,25.500Z" fill="#d89040" stroke="#8a5a20" stroke-width=".6"/><path d="M29,1L32,3L30,7L27.500,5.500Z" fill="#c8b098"/></svg>
<svg class="abs" style="left:886px;top:12px;overflow:visible" width="17" height="16" viewBox="0 0 17 16"><path d="M4.500,0L9,3L4.500,6L0,3ZM12.500,0L17,3L12.500,6L8,3ZM4.500,6L9,9L4.500,12L0,9ZM12.500,6L17,9L12.500,12L8,9ZM8.500,10L12.500,12.500L8.500,15.500L4.500,12.500Z" fill="#f0f0f0"/></svg>
<svg class="abs" style="left:910px;top:11px;overflow:visible" width="18" height="19" viewBox="0 0 18 19"><circle cx="10.500" cy="6" r="5.500" fill="#3a6ae0"/><path d="M6,10L4,14L9,11Z" fill="#3a6ae0"/><path d="M10.500,2.500V7M10.500,8.500V10" stroke="#fff" stroke-width="1.800"/><rect x="1" y="11" width="7" height="4" fill="#d8e0f0" stroke="#5a7ab0" stroke-width=".6"/><rect x="1" y="15.500" width="7" height="2.500" fill="#f0f0f0"/></svg>
<svg class="abs" style="left:933px;top:12px;overflow:visible" width="18" height="17" viewBox="0 0 18 17"><path d="M3,4L9,1L17,4L16,11L9,14L3,11Z" fill="#e8e8e8" stroke="#888" stroke-width=".6"/><path d="M4,5L9,3M6,6.500L12,4M8,8L14,5.500M10,9.500L16,7" stroke="#666" stroke-width=".8"/><path d="M1,13L9,9.500L9,11.500L1,15Z" fill="#38b048"/><path d="M1,15L9,11.500V13L1,16.500Z" fill="#fff"/><path d="M1,16.500L9,13V14.500L1,18Z" fill="#d82828"/></svg>
<svg class="abs" style="left:957px;top:11px;overflow:visible" width="18" height="19" viewBox="0 0 18 19"><circle cx="8" cy="9.500" r="7.500" fill="#e8c020" stroke="#a88010" stroke-width=".8"/><circle cx="8" cy="9.500" r="5" fill="#f8f0c0"/><path d="M6,8L9,12L15,2" fill="none" stroke="#203020" stroke-width="1.600"/><circle cx="12.500" cy="13.500" r="4.300" fill="#2aa838" stroke="#fff" stroke-width=".6"/><path d="M10.500,13.500L12,15.500L14.800,11.800" fill="none" stroke="#fff" stroke-width="1.400"/></svg>
<svg class="abs" style="left:981px;top:11px;overflow:visible" width="19" height="19" viewBox="0 0 19 19"><rect x="3" y="0" width="6" height="5" fill="#c8c8c8" stroke="#888" stroke-width=".6"/><path d="M1.500,5H10.500V12Q10.500,14 8,14V18H4V14Q1.500,14 1.500,12Z" fill="#909090" stroke="#666" stroke-width=".6"/><circle cx="12.500" cy="12.500" r="5" fill="#2aa838" stroke="#e8ffe8" stroke-width=".6"/><path d="M10,12.500L12,15L15.500,10" fill="none" stroke="#fff" stroke-width="1.600"/></svg>
<svg class="abs" style="left:1005px;top:12px;overflow:visible" width="17" height="17" viewBox="0 0 17 17"><rect x="0" y="0" width="1.200" height="12" fill="#8898b8"/><rect x="2" y="2" width="14" height="10" fill="#2a58a8"/><circle cx="6.500" cy="5.500" r="2.200" fill="#e8eef8"/><path d="M3,12C3,8 10,8 10,12Z" fill="#e8eef8"/><path d="M11,4V11M13,6.500V11M15,8V11" stroke="#b8d0f0" stroke-width="1"/><path d="M5,14H13M7,16H11" stroke="#c8d4e8" stroke-width="1"/></svg>
<svg class="abs" style="left:1029px;top:12px;overflow:visible" width="16" height="17" viewBox="0 0 16 17"><path d="M1,7L8,1.500V15.500L1,10Z" fill="#e86848"/><path d="M8,1.500L9.500,2.500V14.500L8,15.500Z" fill="#b84028"/><path d="M12,3V14" stroke="#5a1a10" stroke-width="1"/></svg>
<div class="abs" style="left:1054px;top:13px;width:16px;height:16px;background:#d8ecf8;border:1px solid #3a8ad0;box-shadow:0 0 2px #3a8ad0"></div>
<svg class="abs" style="left:1055px;top:14px;overflow:visible" width="14" height="14" viewBox="0 0 14 14"><circle cx="3.500" cy="3.500" r="2" fill="none" stroke="#2a68b0" stroke-width="1.500"/><path d="M5,5L12,12M9,9L11,7M11,11L12.500,9.500" stroke="#2a68b0" stroke-width="1.500"/></svg>
<svg class="abs" style="left:1077px;top:13px;overflow:visible" width="18" height="15" viewBox="0 0 18 15"><path d="M1,9L13,3L15,13Z" fill="#f0f0f0"/><path d="M3,2L5,3M7,1.500L9,2.500M12,1.500L13,4" stroke="#aaa" stroke-width="1"/><path d="M5,8L8,12M8,6.500L11,11.500M11,5.500L13,11" stroke="#222" stroke-width="1"/></svg>
<svg class="abs" style="left:1101px;top:13px;overflow:visible" width="19" height="16" viewBox="0 0 19 16"><path d="M2,4L5,1H16L18,4V11H2Z" fill="#c8c8c8" stroke="#909090" stroke-width=".6"/><path d="M2,7H18" stroke="#888" stroke-width=".8"/><path d="M6,9L10,14L17,4" fill="none" stroke="#38c048" stroke-width="3"/></svg>
<svg class="abs" style="left:1126px;top:13px;overflow:visible" width="16" height="16" viewBox="0 0 16 16"><path d="M2,0V3M5,0V3M1,3H6V6H1ZM3.500,6V13H7" fill="none" stroke="#f0f0f0" stroke-width="1.300"/><rect x="6" y="3" width="9" height="8" fill="#101418" stroke="#f0f0f0" stroke-width="1.300"/><path d="M8,14H13M10.500,11V14" stroke="#f0f0f0" stroke-width="1.300"/></svg>
<svg class="abs" style="left:1150px;top:13px;overflow:visible" width="16" height="15" viewBox="0 0 16 15"><path d="M1,5H4L8,1V14L4,10H1Z" fill="#f0f0f0"/><path d="M10,5C11.500,6.500 11.500,8.500 10,10M12,2.500C15,5.500 15,9.500 12,12.500" fill="none" stroke="#f0f0f0" stroke-width="1.200"/></svg>
<svg class="abs" style="left:1175px;top:12px;overflow:visible" width="16" height="16" viewBox="0 0 16 16"><path d="M1.500,1V15" stroke="#f0f0f0" stroke-width="1.600"/><path d="M3,2C5,1 7,1 8,2V8C7,7 5,7 3,8ZM8,4C10,5.500 12,5.500 14.500,4L13,7L14.500,9.500C12,11 10,10.500 8,9.500Z" fill="#f0f0f0"/></svg>
<span class="abs" style="left:1200px;top:5.500px;width:62px;text-align:center;font-size:11.700px;color:#fff;white-space:pre;letter-spacing:-.3px">14:01</span>
<span class="abs" style="left:1200px;top:22.500px;width:62px;text-align:center;font-size:11.700px;color:#fff;white-space:pre;letter-spacing:-.3px">15/07/18</span>
<div class="abs" style="left:1266px;top:1px;width:15px;height:39px;border:1px solid #8a8e94;border-right:none;background:linear-gradient(135deg,#5a5e64 0%,#34383e 45%,#1c1f24 55%,#2a2d32 100%)"></div>
</div>
</body></html>
